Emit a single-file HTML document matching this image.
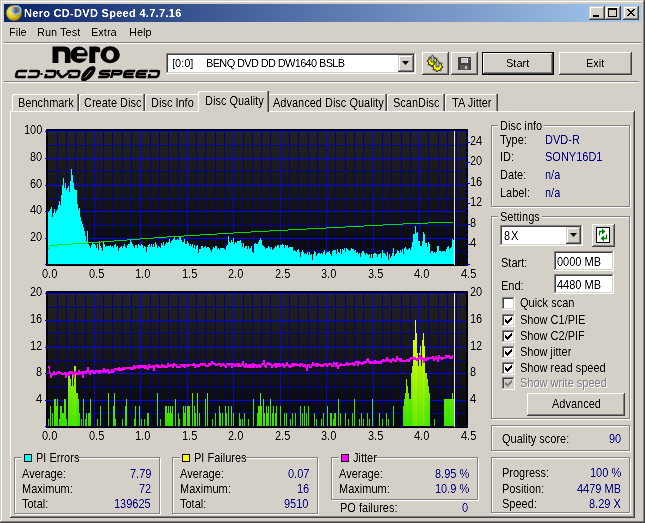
<!DOCTYPE html>
<html><head><meta charset="utf-8"><style>
html,body{margin:0;padding:0;width:645px;height:523px;overflow:hidden;background:#D4D0C8}
body{position:relative;font-family:"Liberation Sans", sans-serif;font-size:11px}
body div, body svg{position:absolute;box-sizing:border-box}
.t{filter:url(#crisp);white-space:nowrap;line-height:13px;font-size:11px;font-family:"Liberation Sans", sans-serif}
</style></head><body>
<svg width="0" height="0" style="left:0;top:0"><filter id="crisp"><feComponentTransfer><feFuncA type="linear" slope="1.6" intercept="-0.3"/></feComponentTransfer></filter></svg>
<div style="left:0px;top:0px;width:645px;height:523px;background:#D4D0C8;"></div>
<div style="left:1px;top:1px;width:642px;height:1px;background:#fff;"></div>
<div style="left:1px;top:1px;width:1px;height:520px;background:#fff;"></div>
<div style="left:644px;top:0px;width:1px;height:523px;background:#404040;"></div>
<div style="left:0px;top:522px;width:645px;height:1px;background:#404040;"></div>
<div style="left:643px;top:1px;width:1px;height:521px;background:#808080;"></div>
<div style="left:1px;top:521px;width:643px;height:1px;background:#808080;"></div>
<div style="left:4px;top:4px;width:637px;height:18px;background:linear-gradient(to right,#0A246A,#A6CAF0);"></div>
<svg style="left:6px;top:5px" width="16" height="16" viewBox="0 0 16 16">
<defs><radialGradient id="cdg" cx="0.4" cy="0.4" r="0.6"><stop offset="0" stop-color="#fff8b0"/><stop offset="0.6" stop-color="#e0c820"/><stop offset="1" stop-color="#a08800"/></radialGradient></defs>
<circle cx="8" cy="8" r="7.8" fill="url(#cdg)"/>
<circle cx="10.5" cy="5.2" r="4.8" fill="#d0d8e0" stroke="#808890" stroke-width="0.8"/>
<circle cx="10.5" cy="5.2" r="3.4" fill="#2090e0"/>
<path d="M8.5 2.5 L11.5 5.5 L9 8" stroke="#e03010" stroke-width="1.4" fill="none"/>
<circle cx="12" cy="3.5" r="1.1" fill="#30a030"/>
</svg>
<div class="t" style="left:24px;top:7px;color:#fff;font-weight:bold;letter-spacing:0.3px">Nero CD-DVD Speed 4.7.7.16</div>
<div style="left:589px;top:6px;width:16px;height:14px;background:#D4D0C8;box-shadow: inset -1px -1px #404040, inset 1px 1px #D4D0C8, inset -2px -2px #808080, inset 2px 2px #fff;"></div>
<div style="left:605px;top:6px;width:16px;height:14px;background:#D4D0C8;box-shadow: inset -1px -1px #404040, inset 1px 1px #D4D0C8, inset -2px -2px #808080, inset 2px 2px #fff;"></div>
<div style="left:623px;top:6px;width:16px;height:14px;background:#D4D0C8;box-shadow: inset -1px -1px #404040, inset 1px 1px #D4D0C8, inset -2px -2px #808080, inset 2px 2px #fff;"></div>
<div style="left:593px;top:15px;width:6px;height:2px;background:#000"></div>
<div style="left:608px;top:8px;width:9px;height:9px;border:1px solid #000;border-top-width:2px"></div>
<svg style="left:627px;top:9px" width="8" height="7" shape-rendering="crispEdges"><path d="M0 0h1v1h-1zM1 0h1v1h-1zM6 0h1v1h-1zM7 0h1v1h-1zM1 1h1v1h-1zM2 1h1v1h-1zM5 1h1v1h-1zM6 1h1v1h-1zM2 2h1v1h-1zM3 2h1v1h-1zM4 2h1v1h-1zM5 2h1v1h-1zM3 3h1v1h-1zM4 3h1v1h-1zM2 4h1v1h-1zM3 4h1v1h-1zM4 4h1v1h-1zM5 4h1v1h-1zM1 5h1v1h-1zM2 5h1v1h-1zM5 5h1v1h-1zM6 5h1v1h-1zM0 6h1v1h-1zM1 6h1v1h-1zM6 6h1v1h-1zM7 6h1v1h-1z" fill="#000"/></svg>
<div class="t" style="left:9px;top:26px;color:#000;">File</div>
<div class="t" style="left:37px;top:26px;color:#000;">Run Test</div>
<div class="t" style="left:91px;top:26px;color:#000;">Extra</div>
<div class="t" style="left:129px;top:26px;color:#000;">Help</div>
<div style="left:4px;top:42px;width:637px;height:1px;background:#808080;"></div>
<div style="left:4px;top:43px;width:637px;height:1px;background:#fff;"></div>
<svg style="left:0;top:0" width="170" height="90" viewBox="0 0 170 90"><path d="M52.5 46.5 H64.5 Q70.5 46.5 70.5 52.5 V63 H64.9 V53.5 Q64.9 51.4 62.8 51.4 H58.4 V63 H52.5 Z" fill="#000"/><ellipse cx="79" cy="54.75" rx="8.7" ry="8.25" fill="#000"/><rect x="77" y="50.1" width="7.5" height="3.1" rx="1.5" fill="#D4D0C8"/><rect x="77" y="56.3" width="12" height="2.2" fill="#D4D0C8"/><path d="M89.3 63 V46.5 H96 Q100.2 46.5 100.2 49 V52.3 H95.2 V63 Z" fill="#000"/><ellipse cx="110.15" cy="54.75" rx="9.7" ry="8.5" fill="#000"/><ellipse cx="110" cy="55" rx="3.9" ry="4.8" fill="#D4D0C8"/><g transform="translate(0,78) skewX(-14) translate(0,-78)" fill="none" stroke="#000" stroke-width="2.6"><path transform="translate(14.5,70)" d="M11 1 H3 Q1 1 1 3 V5 Q1 7 3 7 H11"/><path transform="translate(27.5,70)" d="M0 1 H8 Q10 1 10 3 V5 Q10 7 8 7 H0"/><path transform="translate(44,70)" d="M0 1 H8 Q10 1 10 3 V5 Q10 7 8 7 H0 M1.2 4 V7"/><path transform="translate(56.5,70)" d="M0 0 V3 L4.5 7 H6 L10.5 3 V0"/><path transform="translate(68,70)" d="M0 1 H8 Q10 1 10 3 V5 Q10 7 8 7 H0 M1.2 4 V7"/><path transform="translate(98,70)" d="M11 1 H3 Q1 1 1 2.5 Q1 4 3 4 H8 Q10 4 10 5.5 Q10 7 8 7 H0"/><path transform="translate(110,70)" d="M1.2 8 V1 H8 Q10 1 10 2.6 Q10 4.2 8 4.2 H2"/><path transform="translate(122.5,70)" d="M11 1 H3 Q1 1 1 3 V5 Q1 7 3 7 H11 M1.5 4 H10"/><path transform="translate(135,70)" d="M11 1 H3 Q1 1 1 3 V5 Q1 7 3 7 H11 M1.5 4 H10"/><path transform="translate(147.5,70)" d="M0 1 H8 Q10 1 10 3 V5 Q10 7 8 7 H0 M1.2 4 V7"/></g><rect x="40.5" y="73" width="2" height="2" fill="#000"/><ellipse cx="88.3" cy="73.7" rx="9.6" ry="4.4" transform="rotate(-47 88.3 73.7)" fill="#000"/><path d="M85 77.5 L91.5 70" stroke="#D4D0C8" stroke-width="0.9"/></svg>
<div style="left:166px;top:53px;width:250px;height:21px;background:#fff;box-shadow: inset -1px -1px #fff, inset 1px 1px #808080, inset -2px -2px #D4D0C8, inset 2px 2px #404040;"></div>
<div class="t" style="left:172px;top:57px;color:#000;">[0:0]</div>
<div class="t" style="left:206px;top:57px;color:#000;letter-spacing:-0.65px">BENQ DVD DD DW1640 BSLB</div>
<div style="left:398px;top:55px;width:16px;height:17px;background:#D4D0C8;box-shadow: inset -1px -1px #404040, inset 1px 1px #D4D0C8, inset -2px -2px #808080, inset 2px 2px #fff;"></div>
<svg style="left:402px;top:61px" width="8" height="5"><path d="M0 0 H7 L3.5 4 Z" fill="#000"/></svg>
<div style="left:422px;top:52px;width:27px;height:23px;background:#D4D0C8;box-shadow: inset -1px -1px #404040, inset 1px 1px #fff, inset -2px -2px #808080;"></div>
<div style="left:451px;top:52px;width:27px;height:23px;background:#D4D0C8;box-shadow: inset -1px -1px #404040, inset 1px 1px #fff, inset -2px -2px #808080;"></div>
<svg style="left:426px;top:54px" width="19" height="19" viewBox="0 0 19 19">
<path d="M11.70 7.50 L11.60 8.51 L10.10 8.99 L9.74 9.67 L10.18 11.18 L9.39 11.82 L7.99 11.10 L7.26 11.33 L6.50 12.70 L5.49 12.60 L5.01 11.10 L4.33 10.74 L2.82 11.18 L2.18 10.39 L2.90 8.99 L2.67 8.26 L1.30 7.50 L1.40 6.49 L2.90 6.01 L3.26 5.33 L2.82 3.82 L3.61 3.18 L5.01 3.90 L5.74 3.67 L6.50 2.30 L7.51 2.40 L7.99 3.90 L8.67 4.26 L10.18 3.82 L10.82 4.61 L10.10 6.01 L10.33 6.74Z" fill="#FFFF00" stroke="#000" stroke-width="1"/>
<path d="M5 8 V3 L6.5 0.8 L8 3 V8 Z" fill="#B0B8C8" stroke="#303040" stroke-width="0.8"/>
<path d="M16.70 12.50 L16.60 13.51 L15.10 13.99 L14.74 14.67 L15.18 16.18 L14.39 16.82 L12.99 16.10 L12.26 16.33 L11.50 17.70 L10.49 17.60 L10.01 16.10 L9.33 15.74 L7.82 16.18 L7.18 15.39 L7.90 13.99 L7.67 13.26 L6.30 12.50 L6.40 11.49 L7.90 11.01 L8.26 10.33 L7.82 8.82 L8.61 8.18 L10.01 8.90 L10.74 8.67 L11.50 7.30 L12.51 7.40 L12.99 8.90 L13.67 9.26 L15.18 8.82 L15.82 9.61 L15.10 11.01 L15.33 11.74Z" fill="#FFFF00" stroke="#000" stroke-width="1"/>
<path d="M10 13 V8 L11.5 5.8 L13 8 V13 Z" fill="#B0B8C8" stroke="#303040" stroke-width="0.8"/>
</svg>
<svg style="left:458px;top:57px" width="14" height="14" viewBox="0 0 14 14" shape-rendering="crispEdges">
<path d="M0 0 H12 L13 1 V13 H0 Z" fill="#404040"/>
<rect x="3" y="1" width="7" height="5" fill="#C8C8C8"/>
<rect x="9" y="1" width="1" height="5" fill="#FFFFFF"/>
<rect x="11" y="2" width="1" height="1" fill="#C0C0C0"/>
<rect x="2" y="8" width="9" height="5" fill="#5A5A5A"/>
<rect x="7" y="9" width="2" height="3" fill="#C0C0C0"/>
</svg>
<div style="left:482px;top:52px;width:72px;height:23px;background:#000;"></div>
<div style="left:483px;top:53px;width:70px;height:21px;background:#D4D0C8;box-shadow: inset -1px -1px #404040, inset 1px 1px #fff, inset -2px -2px #808080;"></div>
<div class="t" style="left:506px;top:57px;color:#000;">Start</div>
<div style="left:559px;top:52px;width:73px;height:23px;background:#D4D0C8;box-shadow: inset -1px -1px #404040, inset 1px 1px #fff, inset -2px -2px #808080;"></div>
<div class="t" style="left:586px;top:57px;color:#000;">Exit</div>
<div style="left:4px;top:81px;width:635px;height:1px;background:#808080;"></div>
<div style="left:4px;top:82px;width:635px;height:1px;background:#fff;"></div>
<div style="left:10px;top:111px;width:625px;height:407px;background:#D4D0C8;box-shadow: inset -1px -1px #404040, inset 1px 1px #fff, inset -2px -2px #808080;"></div>
<div style="left:12px;top:94px;width:67px;height:17px;background:#D4D0C8;box-shadow: inset -1px 0 #404040, inset -2px 0 #808080, inset 1px 1px #fff;border-top-left-radius:2px;"></div>
<div class="t" style="left:18px;top:97px;color:#000;transform:scaleY(1.12);transform-origin:0 10px;">Benchmark</div>
<div style="left:79px;top:94px;width:66px;height:17px;background:#D4D0C8;box-shadow: inset -1px 0 #404040, inset -2px 0 #808080, inset 1px 1px #fff;border-top-left-radius:2px;"></div>
<div class="t" style="left:84px;top:97px;color:#000;transform:scaleY(1.12);transform-origin:0 10px;">Create Disc</div>
<div style="left:145px;top:94px;width:55px;height:17px;background:#D4D0C8;box-shadow: inset -1px 0 #404040, inset -2px 0 #808080, inset 1px 1px #fff;border-top-left-radius:2px;"></div>
<div class="t" style="left:151px;top:97px;color:#000;transform:scaleY(1.12);transform-origin:0 10px;">Disc Info</div>
<div style="left:267px;top:94px;width:120px;height:17px;background:#D4D0C8;box-shadow: inset -1px 0 #404040, inset -2px 0 #808080, inset 1px 1px #fff;border-top-left-radius:2px;"></div>
<div class="t" style="left:273px;top:97px;color:#000;transform:scaleY(1.12);transform-origin:0 10px;">Advanced Disc Quality</div>
<div style="left:387px;top:94px;width:58px;height:17px;background:#D4D0C8;box-shadow: inset -1px 0 #404040, inset -2px 0 #808080, inset 1px 1px #fff;border-top-left-radius:2px;"></div>
<div class="t" style="left:393px;top:97px;color:#000;transform:scaleY(1.12);transform-origin:0 10px;">ScanDisc</div>
<div style="left:445px;top:94px;width:53px;height:17px;background:#D4D0C8;box-shadow: inset -1px 0 #404040, inset -2px 0 #808080, inset 1px 1px #fff;border-top-left-radius:2px;"></div>
<div class="t" style="left:452px;top:97px;color:#000;transform:scaleY(1.12);transform-origin:0 10px;">TA Jitter</div>
<div style="left:198px;top:91px;width:71px;height:21px;background:#D4D0C8;box-shadow: inset -1px 0 #404040, inset -2px 0 #808080, inset 1px 1px #fff;border-top-left-radius:2px;"></div>
<div class="t" style="left:205px;top:95px;color:#000;transform:scaleY(1.12);transform-origin:0 10px;">Disc Quality</div>
<svg style="left:0;top:0" width="645" height="523" shape-rendering="crispEdges"><defs><linearGradient id="bg" x1="0" y1="0" x2="0" y2="1"><stop offset="0" stop-color="#222222"/><stop offset="1" stop-color="#080808"/></linearGradient><linearGradient id="bar" gradientUnits="userSpaceOnUse" x1="0" y1="427" x2="0" y2="307"><stop offset="0" stop-color="#10E000"/><stop offset="0.35" stop-color="#70F000"/><stop offset="1" stop-color="#FFFF00"/></linearGradient><linearGradient id="bg1" x1="0" y1="0" x2="0" y2="1"><stop offset="0" stop-color="#2FE200"/><stop offset="1" stop-color="#25E100"/></linearGradient><linearGradient id="bg2" x1="0" y1="0" x2="0" y2="1"><stop offset="0" stop-color="#3EE400"/><stop offset="1" stop-color="#2AE100"/></linearGradient><linearGradient id="bg3" x1="0" y1="0" x2="0" y2="1"><stop offset="0" stop-color="#4DE600"/><stop offset="1" stop-color="#30E200"/></linearGradient><linearGradient id="bg4" x1="0" y1="0" x2="0" y2="1"><stop offset="0" stop-color="#5BE800"/><stop offset="1" stop-color="#35E300"/></linearGradient><linearGradient id="bg5" x1="0" y1="0" x2="0" y2="1"><stop offset="0" stop-color="#6AEA00"/><stop offset="1" stop-color="#3AE400"/></linearGradient><linearGradient id="bg6" x1="0" y1="0" x2="0" y2="1"><stop offset="0" stop-color="#79EC00"/><stop offset="1" stop-color="#3FE400"/></linearGradient><linearGradient id="bg7" x1="0" y1="0" x2="0" y2="1"><stop offset="0" stop-color="#88EE00"/><stop offset="1" stop-color="#44E500"/></linearGradient><linearGradient id="bg8" x1="0" y1="0" x2="0" y2="1"><stop offset="0" stop-color="#97F100"/><stop offset="1" stop-color="#4AE600"/></linearGradient><linearGradient id="bg9" x1="0" y1="0" x2="0" y2="1"><stop offset="0" stop-color="#A6F300"/><stop offset="1" stop-color="#4FE700"/></linearGradient><linearGradient id="bg11" x1="0" y1="0" x2="0" y2="1"><stop offset="0" stop-color="#C4F700"/><stop offset="1" stop-color="#59E800"/></linearGradient><linearGradient id="bg12" x1="0" y1="0" x2="0" y2="1"><stop offset="0" stop-color="#D2F900"/><stop offset="1" stop-color="#5EE900"/></linearGradient><linearGradient id="bg13" x1="0" y1="0" x2="0" y2="1"><stop offset="0" stop-color="#E1FB00"/><stop offset="1" stop-color="#64E900"/></linearGradient><linearGradient id="bg14" x1="0" y1="0" x2="0" y2="1"><stop offset="0" stop-color="#F0FD00"/><stop offset="1" stop-color="#69EA00"/></linearGradient><linearGradient id="bg16" x1="0" y1="0" x2="0" y2="1"><stop offset="0" stop-color="#FFFF00"/><stop offset="1" stop-color="#6EEB00"/></linearGradient></defs><rect x="46" y="129" width="422" height="137" fill="#000"/><rect x="48" y="131" width="418" height="134" fill="url(#bg)"/><rect x="45" y="128" width="1" height="1" fill="#fff"/><rect x="46" y="291" width="422" height="137" fill="#000"/><rect x="48" y="293" width="418" height="134" fill="url(#bg)"/><rect x="45" y="290" width="1" height="1" fill="#fff"/><rect x="57" y="131" width="1" height="134" fill="#000090"/><rect x="66" y="131" width="1" height="134" fill="#000090"/><rect x="75" y="131" width="1" height="134" fill="#000090"/><rect x="85" y="131" width="1" height="134" fill="#000090"/><rect x="103" y="131" width="1" height="134" fill="#000090"/><rect x="112" y="131" width="1" height="134" fill="#000090"/><rect x="122" y="131" width="1" height="134" fill="#000090"/><rect x="131" y="131" width="1" height="134" fill="#000090"/><rect x="150" y="131" width="1" height="134" fill="#000090"/><rect x="159" y="131" width="1" height="134" fill="#000090"/><rect x="168" y="131" width="1" height="134" fill="#000090"/><rect x="178" y="131" width="1" height="134" fill="#000090"/><rect x="196" y="131" width="1" height="134" fill="#000090"/><rect x="205" y="131" width="1" height="134" fill="#000090"/><rect x="215" y="131" width="1" height="134" fill="#000090"/><rect x="224" y="131" width="1" height="134" fill="#000090"/><rect x="243" y="131" width="1" height="134" fill="#000090"/><rect x="252" y="131" width="1" height="134" fill="#000090"/><rect x="261" y="131" width="1" height="134" fill="#000090"/><rect x="270" y="131" width="1" height="134" fill="#000090"/><rect x="289" y="131" width="1" height="134" fill="#000090"/><rect x="298" y="131" width="1" height="134" fill="#000090"/><rect x="308" y="131" width="1" height="134" fill="#000090"/><rect x="317" y="131" width="1" height="134" fill="#000090"/><rect x="335" y="131" width="1" height="134" fill="#000090"/><rect x="345" y="131" width="1" height="134" fill="#000090"/><rect x="354" y="131" width="1" height="134" fill="#000090"/><rect x="363" y="131" width="1" height="134" fill="#000090"/><rect x="382" y="131" width="1" height="134" fill="#000090"/><rect x="391" y="131" width="1" height="134" fill="#000090"/><rect x="401" y="131" width="1" height="134" fill="#000090"/><rect x="410" y="131" width="1" height="134" fill="#000090"/><rect x="428" y="131" width="1" height="134" fill="#000090"/><rect x="438" y="131" width="1" height="134" fill="#000090"/><rect x="447" y="131" width="1" height="134" fill="#000090"/><rect x="456" y="131" width="1" height="134" fill="#000090"/><rect x="46" y="145" width="420" height="1" fill="#000090"/><rect x="46" y="171" width="420" height="1" fill="#000090"/><rect x="46" y="198" width="420" height="1" fill="#000090"/><rect x="46" y="225" width="420" height="1" fill="#000090"/><rect x="46" y="251" width="420" height="1" fill="#000090"/><rect x="94" y="131" width="1" height="134" fill="#0000FF"/><rect x="140" y="131" width="1" height="134" fill="#0000FF"/><rect x="187" y="131" width="1" height="134" fill="#0000FF"/><rect x="233" y="131" width="1" height="134" fill="#0000FF"/><rect x="280" y="131" width="1" height="134" fill="#0000FF"/><rect x="326" y="131" width="1" height="134" fill="#0000FF"/><rect x="373" y="131" width="1" height="134" fill="#0000FF"/><rect x="419" y="131" width="1" height="134" fill="#0000FF"/><rect x="45" y="131" width="421" height="1" fill="#0000FF"/><rect x="45" y="158" width="421" height="1" fill="#0000FF"/><rect x="45" y="185" width="421" height="1" fill="#0000FF"/><rect x="45" y="211" width="421" height="1" fill="#0000FF"/><rect x="45" y="238" width="421" height="1" fill="#0000FF"/><rect x="45" y="264" width="3" height="1" fill="#0000FF"/><rect x="57" y="293" width="1" height="134" fill="#000090"/><rect x="66" y="293" width="1" height="134" fill="#000090"/><rect x="75" y="293" width="1" height="134" fill="#000090"/><rect x="85" y="293" width="1" height="134" fill="#000090"/><rect x="103" y="293" width="1" height="134" fill="#000090"/><rect x="112" y="293" width="1" height="134" fill="#000090"/><rect x="122" y="293" width="1" height="134" fill="#000090"/><rect x="131" y="293" width="1" height="134" fill="#000090"/><rect x="150" y="293" width="1" height="134" fill="#000090"/><rect x="159" y="293" width="1" height="134" fill="#000090"/><rect x="168" y="293" width="1" height="134" fill="#000090"/><rect x="178" y="293" width="1" height="134" fill="#000090"/><rect x="196" y="293" width="1" height="134" fill="#000090"/><rect x="205" y="293" width="1" height="134" fill="#000090"/><rect x="215" y="293" width="1" height="134" fill="#000090"/><rect x="224" y="293" width="1" height="134" fill="#000090"/><rect x="243" y="293" width="1" height="134" fill="#000090"/><rect x="252" y="293" width="1" height="134" fill="#000090"/><rect x="261" y="293" width="1" height="134" fill="#000090"/><rect x="270" y="293" width="1" height="134" fill="#000090"/><rect x="289" y="293" width="1" height="134" fill="#000090"/><rect x="298" y="293" width="1" height="134" fill="#000090"/><rect x="308" y="293" width="1" height="134" fill="#000090"/><rect x="317" y="293" width="1" height="134" fill="#000090"/><rect x="335" y="293" width="1" height="134" fill="#000090"/><rect x="345" y="293" width="1" height="134" fill="#000090"/><rect x="354" y="293" width="1" height="134" fill="#000090"/><rect x="363" y="293" width="1" height="134" fill="#000090"/><rect x="382" y="293" width="1" height="134" fill="#000090"/><rect x="391" y="293" width="1" height="134" fill="#000090"/><rect x="401" y="293" width="1" height="134" fill="#000090"/><rect x="410" y="293" width="1" height="134" fill="#000090"/><rect x="428" y="293" width="1" height="134" fill="#000090"/><rect x="438" y="293" width="1" height="134" fill="#000090"/><rect x="447" y="293" width="1" height="134" fill="#000090"/><rect x="456" y="293" width="1" height="134" fill="#000090"/><rect x="46" y="307" width="420" height="1" fill="#000090"/><rect x="46" y="333" width="420" height="1" fill="#000090"/><rect x="46" y="360" width="420" height="1" fill="#000090"/><rect x="46" y="387" width="420" height="1" fill="#000090"/><rect x="46" y="413" width="420" height="1" fill="#000090"/><rect x="94" y="293" width="1" height="134" fill="#0000FF"/><rect x="140" y="293" width="1" height="134" fill="#0000FF"/><rect x="187" y="293" width="1" height="134" fill="#0000FF"/><rect x="233" y="293" width="1" height="134" fill="#0000FF"/><rect x="280" y="293" width="1" height="134" fill="#0000FF"/><rect x="326" y="293" width="1" height="134" fill="#0000FF"/><rect x="373" y="293" width="1" height="134" fill="#0000FF"/><rect x="419" y="293" width="1" height="134" fill="#0000FF"/><rect x="45" y="293" width="421" height="1" fill="#0000FF"/><rect x="45" y="320" width="421" height="1" fill="#0000FF"/><rect x="45" y="347" width="421" height="1" fill="#0000FF"/><rect x="45" y="373" width="421" height="1" fill="#0000FF"/><rect x="45" y="400" width="421" height="1" fill="#0000FF"/><rect x="45" y="426" width="3" height="1" fill="#0000FF"/><path d="M48 212h1V264h-1ZM49 211h1V264h-1ZM50 209h1V264h-1ZM51 207h1V264h-1ZM52 217h1V264h-1ZM53 213h1V264h-1ZM54 209h1V264h-1ZM55 213h1V264h-1ZM56 211h1V264h-1ZM57 209h1V264h-1ZM58 205h1V264h-1ZM59 201h1V264h-1ZM60 205h1V264h-1ZM61 195h1V264h-1ZM62 185h1V264h-1ZM63 178h1V264h-1ZM64 188h1V264h-1ZM65 183h1V264h-1ZM66 190h1V264h-1ZM67 188h1V264h-1ZM68 186h1V264h-1ZM69 192h1V264h-1ZM70 181h1V264h-1ZM71 169h1V264h-1ZM72 175h1V264h-1ZM73 183h1V264h-1ZM74 189h1V264h-1ZM75 190h1V264h-1ZM76 190h1V264h-1ZM77 204h1V264h-1ZM78 210h1V264h-1ZM79 208h1V264h-1ZM80 217h1V264h-1ZM81 221h1V264h-1ZM82 224h1V264h-1ZM83 227h1V264h-1ZM84 231h1V264h-1ZM85 236h1V264h-1ZM86 241h1V264h-1ZM87 231h1V264h-1ZM88 244h1V264h-1ZM89 246h1V264h-1ZM90 248h1V264h-1ZM91 245h1V264h-1ZM92 243h1V264h-1ZM93 244h1V264h-1ZM94 244h1V264h-1ZM95 245h1V264h-1ZM96 248h1V264h-1ZM97 244h1V264h-1ZM98 250h1V264h-1ZM99 241h1V264h-1ZM100 246h1V264h-1ZM101 248h1V264h-1ZM102 251h1V264h-1ZM103 241h1V264h-1ZM104 244h1V264h-1ZM105 247h1V264h-1ZM106 246h1V264h-1ZM107 246h1V264h-1ZM108 246h1V264h-1ZM109 246h1V264h-1ZM110 245h1V264h-1ZM111 247h1V264h-1ZM112 246h1V264h-1ZM113 248h1V264h-1ZM114 245h1V264h-1ZM115 244h1V264h-1ZM116 247h1V264h-1ZM117 246h1V264h-1ZM118 251h1V264h-1ZM119 248h1V264h-1ZM120 247h1V264h-1ZM121 246h1V264h-1ZM122 248h1V264h-1ZM123 246h1V264h-1ZM124 244h1V264h-1ZM125 247h1V264h-1ZM126 248h1V264h-1ZM127 245h1V264h-1ZM128 244h1V264h-1ZM129 244h1V264h-1ZM130 239h1V264h-1ZM131 242h1V264h-1ZM132 244h1V264h-1ZM133 246h1V264h-1ZM134 248h1V264h-1ZM135 245h1V264h-1ZM136 245h1V264h-1ZM137 248h1V264h-1ZM138 244h1V264h-1ZM139 245h1V264h-1ZM140 246h1V264h-1ZM141 244h1V264h-1ZM142 245h1V264h-1ZM143 248h1V264h-1ZM144 246h1V264h-1ZM145 247h1V264h-1ZM146 252h1V264h-1ZM147 247h1V264h-1ZM148 245h1V264h-1ZM149 244h1V264h-1ZM150 247h1V264h-1ZM151 244h1V264h-1ZM152 247h1V264h-1ZM153 244h1V264h-1ZM154 247h1V264h-1ZM155 242h1V264h-1ZM156 244h1V264h-1ZM157 248h1V264h-1ZM158 246h1V264h-1ZM159 247h1V264h-1ZM160 248h1V264h-1ZM161 243h1V264h-1ZM162 245h1V264h-1ZM163 242h1V264h-1ZM164 246h1V264h-1ZM165 244h1V264h-1ZM166 242h1V264h-1ZM167 243h1V264h-1ZM168 242h1V264h-1ZM169 239h1V264h-1ZM170 243h1V264h-1ZM171 241h1V264h-1ZM172 240h1V264h-1ZM173 239h1V264h-1ZM174 236h1V264h-1ZM175 240h1V264h-1ZM176 240h1V264h-1ZM177 239h1V264h-1ZM178 240h1V264h-1ZM179 237h1V264h-1ZM180 237h1V264h-1ZM181 240h1V264h-1ZM182 242h1V264h-1ZM183 242h1V264h-1ZM184 239h1V264h-1ZM185 244h1V264h-1ZM186 244h1V264h-1ZM187 241h1V264h-1ZM188 243h1V264h-1ZM189 246h1V264h-1ZM190 244h1V264h-1ZM191 246h1V264h-1ZM192 244h1V264h-1ZM193 248h1V264h-1ZM194 245h1V264h-1ZM195 249h1V264h-1ZM196 246h1V264h-1ZM197 245h1V264h-1ZM198 253h1V264h-1ZM199 249h1V264h-1ZM200 249h1V264h-1ZM201 246h1V264h-1ZM202 246h1V264h-1ZM203 248h1V264h-1ZM204 247h1V264h-1ZM205 246h1V264h-1ZM206 248h1V264h-1ZM207 247h1V264h-1ZM208 247h1V264h-1ZM209 248h1V264h-1ZM210 250h1V264h-1ZM211 252h1V264h-1ZM212 249h1V264h-1ZM213 247h1V264h-1ZM214 248h1V264h-1ZM215 246h1V264h-1ZM216 246h1V264h-1ZM217 249h1V264h-1ZM218 248h1V264h-1ZM219 250h1V264h-1ZM220 248h1V264h-1ZM221 248h1V264h-1ZM222 248h1V264h-1ZM223 248h1V264h-1ZM224 249h1V264h-1ZM225 250h1V264h-1ZM226 246h1V264h-1ZM227 245h1V264h-1ZM228 236h1V264h-1ZM229 242h1V264h-1ZM230 243h1V264h-1ZM231 240h1V264h-1ZM232 242h1V264h-1ZM233 238h1V264h-1ZM234 244h1V264h-1ZM235 242h1V264h-1ZM236 243h1V264h-1ZM237 241h1V264h-1ZM238 241h1V264h-1ZM239 241h1V264h-1ZM240 240h1V264h-1ZM241 243h1V264h-1ZM242 247h1V264h-1ZM243 243h1V264h-1ZM244 248h1V264h-1ZM245 246h1V264h-1ZM246 246h1V264h-1ZM247 249h1V264h-1ZM248 246h1V264h-1ZM249 249h1V264h-1ZM250 248h1V264h-1ZM251 246h1V264h-1ZM252 252h1V264h-1ZM253 253h1V264h-1ZM254 244h1V264h-1ZM255 243h1V264h-1ZM256 244h1V264h-1ZM257 244h1V264h-1ZM258 242h1V264h-1ZM259 240h1V264h-1ZM260 238h1V264h-1ZM261 240h1V264h-1ZM262 245h1V264h-1ZM263 246h1V264h-1ZM264 247h1V264h-1ZM265 249h1V264h-1ZM266 248h1V264h-1ZM267 248h1V264h-1ZM268 246h1V264h-1ZM269 247h1V264h-1ZM270 249h1V264h-1ZM271 247h1V264h-1ZM272 250h1V264h-1ZM273 249h1V264h-1ZM274 248h1V264h-1ZM275 246h1V264h-1ZM276 247h1V264h-1ZM277 245h1V264h-1ZM278 245h1V264h-1ZM279 248h1V264h-1ZM280 245h1V264h-1ZM281 245h1V264h-1ZM282 244h1V264h-1ZM283 245h1V264h-1ZM284 248h1V264h-1ZM285 245h1V264h-1ZM286 246h1V264h-1ZM287 245h1V264h-1ZM288 248h1V264h-1ZM289 247h1V264h-1ZM290 247h1V264h-1ZM291 247h1V264h-1ZM292 247h1V264h-1ZM293 251h1V264h-1ZM294 250h1V264h-1ZM295 251h1V264h-1ZM296 252h1V264h-1ZM297 250h1V264h-1ZM298 249h1V264h-1ZM299 252h1V264h-1ZM300 257h1V264h-1ZM301 252h1V264h-1ZM302 250h1V264h-1ZM303 252h1V264h-1ZM304 254h1V264h-1ZM305 253h1V264h-1ZM306 254h1V264h-1ZM307 252h1V264h-1ZM308 255h1V264h-1ZM309 252h1V264h-1ZM310 255h1V264h-1ZM311 254h1V264h-1ZM312 260h1V264h-1ZM313 254h1V264h-1ZM314 251h1V264h-1ZM315 252h1V264h-1ZM316 256h1V264h-1ZM317 254h1V264h-1ZM318 253h1V264h-1ZM319 253h1V264h-1ZM320 254h1V264h-1ZM321 253h1V264h-1ZM322 254h1V264h-1ZM323 252h1V264h-1ZM324 250h1V264h-1ZM325 255h1V264h-1ZM326 253h1V264h-1ZM327 252h1V264h-1ZM328 252h1V264h-1ZM329 251h1V264h-1ZM330 254h1V264h-1ZM331 256h1V264h-1ZM332 251h1V264h-1ZM333 250h1V264h-1ZM334 250h1V264h-1ZM335 250h1V264h-1ZM336 254h1V264h-1ZM337 249h1V264h-1ZM338 252h1V264h-1ZM339 253h1V264h-1ZM340 249h1V264h-1ZM341 254h1V264h-1ZM342 249h1V264h-1ZM343 250h1V264h-1ZM344 248h1V264h-1ZM345 252h1V264h-1ZM346 248h1V264h-1ZM347 249h1V264h-1ZM348 250h1V264h-1ZM349 251h1V264h-1ZM350 250h1V264h-1ZM351 248h1V264h-1ZM352 249h1V264h-1ZM353 249h1V264h-1ZM354 251h1V264h-1ZM355 250h1V264h-1ZM356 253h1V264h-1ZM357 252h1V264h-1ZM358 254h1V264h-1ZM359 253h1V264h-1ZM360 257h1V264h-1ZM361 253h1V264h-1ZM362 251h1V264h-1ZM363 251h1V264h-1ZM364 253h1V264h-1ZM365 255h1V264h-1ZM366 253h1V264h-1ZM367 254h1V264h-1ZM368 255h1V264h-1ZM369 254h1V264h-1ZM370 258h1V264h-1ZM371 254h1V264h-1ZM372 258h1V264h-1ZM373 254h1V264h-1ZM374 253h1V264h-1ZM375 253h1V264h-1ZM376 254h1V264h-1ZM377 257h1V264h-1ZM378 254h1V264h-1ZM379 254h1V264h-1ZM380 253h1V264h-1ZM381 258h1V264h-1ZM382 250h1V264h-1ZM383 253h1V264h-1ZM384 253h1V264h-1ZM385 254h1V264h-1ZM386 256h1V264h-1ZM387 252h1V264h-1ZM388 260h1V264h-1ZM389 254h1V264h-1ZM390 258h1V264h-1ZM391 256h1V264h-1ZM392 253h1V264h-1ZM393 248h1V264h-1ZM394 256h1V264h-1ZM395 254h1V264h-1ZM396 253h1V264h-1ZM397 250h1V264h-1ZM398 251h1V264h-1ZM399 253h1V264h-1ZM400 250h1V264h-1ZM401 252h1V264h-1ZM402 249h1V264h-1ZM403 254h1V264h-1ZM404 248h1V264h-1ZM405 247h1V264h-1ZM406 249h1V264h-1ZM407 250h1V264h-1ZM408 249h1V264h-1ZM409 248h1V264h-1ZM410 250h1V264h-1ZM411 247h1V264h-1ZM412 242h1V264h-1ZM413 234h1V264h-1ZM414 234h1V264h-1ZM415 226h1V264h-1ZM416 233h1V264h-1ZM417 232h1V264h-1ZM418 241h1V264h-1ZM419 241h1V264h-1ZM420 246h1V264h-1ZM421 246h1V264h-1ZM422 241h1V264h-1ZM423 232h1V264h-1ZM424 234h1V264h-1ZM425 243h1V264h-1ZM426 243h1V264h-1ZM427 247h1V264h-1ZM428 242h1V264h-1ZM429 244h1V264h-1ZM430 253h1V264h-1ZM431 251h1V264h-1ZM432 251h1V264h-1ZM433 253h1V264h-1ZM434 252h1V264h-1ZM435 253h1V264h-1ZM436 252h1V264h-1ZM437 246h1V264h-1ZM438 246h1V264h-1ZM439 251h1V264h-1ZM440 251h1V264h-1ZM441 252h1V264h-1ZM442 251h1V264h-1ZM443 251h1V264h-1ZM444 251h1V264h-1ZM445 252h1V264h-1ZM446 249h1V264h-1ZM447 247h1V264h-1ZM448 246h1V264h-1ZM449 249h1V264h-1ZM450 248h1V264h-1ZM451 247h1V264h-1ZM452 239h1V264h-1ZM453 240h1V264h-1Z" fill="#00FFFF"/><path d="M48 248h1v1h-1ZM49 246h1v1h-1ZM50 245h1v1h-1ZM51 245h1v1h-1ZM52 245h1v1h-1ZM53 245h1v1h-1ZM54 245h1v1h-1ZM55 245h1v1h-1ZM56 245h1v1h-1ZM57 245h1v1h-1ZM58 244h1v1h-1ZM59 244h1v1h-1ZM60 244h1v1h-1ZM61 244h1v1h-1ZM62 244h1v1h-1ZM63 244h1v1h-1ZM64 244h1v1h-1ZM65 244h1v1h-1ZM66 244h1v1h-1ZM67 244h1v1h-1ZM68 244h1v1h-1ZM69 244h1v1h-1ZM70 244h1v1h-1ZM71 244h1v1h-1ZM72 243h1v1h-1ZM73 243h1v1h-1ZM74 243h1v1h-1ZM75 243h1v1h-1ZM76 243h1v1h-1ZM77 243h1v1h-1ZM78 243h1v1h-1ZM79 243h1v1h-1ZM80 243h1v1h-1ZM81 243h1v1h-1ZM82 243h1v1h-1ZM83 243h1v1h-1ZM84 243h1v1h-1ZM85 243h1v1h-1ZM86 243h1v1h-1ZM87 242h1v1h-1ZM88 242h1v1h-1ZM89 242h1v1h-1ZM90 242h1v1h-1ZM91 242h1v1h-1ZM92 242h1v1h-1ZM93 242h1v1h-1ZM94 242h1v1h-1ZM95 242h1v1h-1ZM96 242h1v1h-1ZM97 242h1v1h-1ZM98 242h1v1h-1ZM99 242h1v1h-1ZM100 242h1v1h-1ZM101 241h1v1h-1ZM102 241h1v1h-1ZM103 241h1v1h-1ZM104 241h1v1h-1ZM105 241h1v1h-1ZM106 241h1v1h-1ZM107 241h1v1h-1ZM108 241h1v1h-1ZM109 241h1v1h-1ZM110 241h1v1h-1ZM111 241h1v1h-1ZM112 241h1v1h-1ZM113 241h1v1h-1ZM114 240h1v1h-1ZM115 240h1v1h-1ZM116 240h1v1h-1ZM117 240h1v1h-1ZM118 240h1v1h-1ZM119 240h1v1h-1ZM120 240h1v1h-1ZM121 240h1v1h-1ZM122 240h1v1h-1ZM123 240h1v1h-1ZM124 240h1v1h-1ZM125 240h1v1h-1ZM126 240h1v1h-1ZM127 239h1v1h-1ZM128 239h1v1h-1ZM129 239h1v1h-1ZM130 239h1v1h-1ZM131 239h1v1h-1ZM132 239h1v1h-1ZM133 239h1v1h-1ZM134 239h1v1h-1ZM135 239h1v1h-1ZM136 239h1v1h-1ZM137 239h1v1h-1ZM138 239h1v1h-1ZM139 239h1v1h-1ZM140 238h1v1h-1ZM141 238h1v1h-1ZM142 238h1v1h-1ZM143 238h1v1h-1ZM144 238h1v1h-1ZM145 238h1v1h-1ZM146 238h1v1h-1ZM147 238h1v1h-1ZM148 238h1v1h-1ZM149 238h1v1h-1ZM150 238h1v1h-1ZM151 238h1v1h-1ZM152 238h1v1h-1ZM153 238h1v1h-1ZM154 237h1v1h-1ZM155 237h1v1h-1ZM156 237h1v1h-1ZM157 237h1v1h-1ZM158 237h1v1h-1ZM159 237h1v1h-1ZM160 237h1v1h-1ZM161 237h1v1h-1ZM162 237h1v1h-1ZM163 237h1v1h-1ZM164 237h1v1h-1ZM165 237h1v1h-1ZM166 237h1v1h-1ZM167 236h1v1h-1ZM168 236h1v1h-1ZM169 236h1v1h-1ZM170 236h1v1h-1ZM171 236h1v1h-1ZM172 236h1v1h-1ZM173 236h1v1h-1ZM174 236h1v1h-1ZM175 236h1v1h-1ZM176 236h1v1h-1ZM177 236h1v1h-1ZM178 236h1v1h-1ZM179 236h1v1h-1ZM180 236h1v1h-1ZM181 236h1v1h-1ZM182 236h1v1h-1ZM183 236h1v1h-1ZM184 235h1v1h-1ZM185 235h1v1h-1ZM186 235h1v1h-1ZM187 235h1v1h-1ZM188 235h1v1h-1ZM189 235h1v1h-1ZM190 235h1v1h-1ZM191 235h1v1h-1ZM192 235h1v1h-1ZM193 235h1v1h-1ZM194 235h1v1h-1ZM195 235h1v1h-1ZM196 235h1v1h-1ZM197 235h1v1h-1ZM198 235h1v1h-1ZM199 235h1v1h-1ZM200 234h1v1h-1ZM201 234h1v1h-1ZM202 234h1v1h-1ZM203 234h1v1h-1ZM204 234h1v1h-1ZM205 234h1v1h-1ZM206 234h1v1h-1ZM207 234h1v1h-1ZM208 234h1v1h-1ZM209 234h1v1h-1ZM210 234h1v1h-1ZM211 234h1v1h-1ZM212 234h1v1h-1ZM213 234h1v1h-1ZM214 234h1v1h-1ZM215 234h1v1h-1ZM216 234h1v1h-1ZM217 233h1v1h-1ZM218 233h1v1h-1ZM219 233h1v1h-1ZM220 233h1v1h-1ZM221 233h1v1h-1ZM222 233h1v1h-1ZM223 233h1v1h-1ZM224 233h1v1h-1ZM225 233h1v1h-1ZM226 233h1v1h-1ZM227 233h1v1h-1ZM228 233h1v1h-1ZM229 233h1v1h-1ZM230 233h1v1h-1ZM231 233h1v1h-1ZM232 233h1v1h-1ZM233 233h1v1h-1ZM234 232h1v1h-1ZM235 232h1v1h-1ZM236 232h1v1h-1ZM237 232h1v1h-1ZM238 232h1v1h-1ZM239 232h1v1h-1ZM240 232h1v1h-1ZM241 232h1v1h-1ZM242 232h1v1h-1ZM243 232h1v1h-1ZM244 232h1v1h-1ZM245 232h1v1h-1ZM246 232h1v1h-1ZM247 232h1v1h-1ZM248 232h1v1h-1ZM249 232h1v1h-1ZM250 232h1v1h-1ZM251 231h1v1h-1ZM252 231h1v1h-1ZM253 231h1v1h-1ZM254 231h1v1h-1ZM255 231h1v1h-1ZM256 231h1v1h-1ZM257 231h1v1h-1ZM258 231h1v1h-1ZM259 231h1v1h-1ZM260 231h1v1h-1ZM261 231h1v1h-1ZM262 231h1v1h-1ZM263 231h1v1h-1ZM264 231h1v1h-1ZM265 231h1v1h-1ZM266 231h1v1h-1ZM267 231h1v1h-1ZM268 231h1v1h-1ZM269 230h1v1h-1ZM270 230h1v1h-1ZM271 230h1v1h-1ZM272 230h1v1h-1ZM273 230h1v1h-1ZM274 230h1v1h-1ZM275 230h1v1h-1ZM276 230h1v1h-1ZM277 230h1v1h-1ZM278 230h1v1h-1ZM279 230h1v1h-1ZM280 230h1v1h-1ZM281 230h1v1h-1ZM282 230h1v1h-1ZM283 230h1v1h-1ZM284 230h1v1h-1ZM285 230h1v1h-1ZM286 230h1v1h-1ZM287 230h1v1h-1ZM288 229h1v1h-1ZM289 229h1v1h-1ZM290 229h1v1h-1ZM291 229h1v1h-1ZM292 229h1v1h-1ZM293 229h1v1h-1ZM294 229h1v1h-1ZM295 229h1v1h-1ZM296 229h1v1h-1ZM297 229h1v1h-1ZM298 229h1v1h-1ZM299 229h1v1h-1ZM300 229h1v1h-1ZM301 229h1v1h-1ZM302 229h1v1h-1ZM303 229h1v1h-1ZM304 229h1v1h-1ZM305 229h1v1h-1ZM306 229h1v1h-1ZM307 228h1v1h-1ZM308 228h1v1h-1ZM309 228h1v1h-1ZM310 228h1v1h-1ZM311 228h1v1h-1ZM312 228h1v1h-1ZM313 228h1v1h-1ZM314 228h1v1h-1ZM315 228h1v1h-1ZM316 228h1v1h-1ZM317 228h1v1h-1ZM318 228h1v1h-1ZM319 228h1v1h-1ZM320 228h1v1h-1ZM321 228h1v1h-1ZM322 228h1v1h-1ZM323 228h1v1h-1ZM324 228h1v1h-1ZM325 228h1v1h-1ZM326 227h1v1h-1ZM327 227h1v1h-1ZM328 227h1v1h-1ZM329 227h1v1h-1ZM330 227h1v1h-1ZM331 227h1v1h-1ZM332 227h1v1h-1ZM333 227h1v1h-1ZM334 227h1v1h-1ZM335 227h1v1h-1ZM336 227h1v1h-1ZM337 227h1v1h-1ZM338 227h1v1h-1ZM339 227h1v1h-1ZM340 227h1v1h-1ZM341 227h1v1h-1ZM342 227h1v1h-1ZM343 227h1v1h-1ZM344 227h1v1h-1ZM345 226h1v1h-1ZM346 226h1v1h-1ZM347 226h1v1h-1ZM348 226h1v1h-1ZM349 226h1v1h-1ZM350 226h1v1h-1ZM351 226h1v1h-1ZM352 226h1v1h-1ZM353 226h1v1h-1ZM354 226h1v1h-1ZM355 226h1v1h-1ZM356 226h1v1h-1ZM357 226h1v1h-1ZM358 226h1v1h-1ZM359 226h1v1h-1ZM360 226h1v1h-1ZM361 226h1v1h-1ZM362 226h1v1h-1ZM363 226h1v1h-1ZM364 225h1v1h-1ZM365 225h1v1h-1ZM366 225h1v1h-1ZM367 225h1v1h-1ZM368 225h1v1h-1ZM369 225h1v1h-1ZM370 225h1v1h-1ZM371 225h1v1h-1ZM372 225h1v1h-1ZM373 225h1v1h-1ZM374 225h1v1h-1ZM375 225h1v1h-1ZM376 225h1v1h-1ZM377 225h1v1h-1ZM378 225h1v1h-1ZM379 225h1v1h-1ZM380 225h1v1h-1ZM381 225h1v1h-1ZM382 225h1v1h-1ZM383 224h1v1h-1ZM384 224h1v1h-1ZM385 224h1v1h-1ZM386 224h1v1h-1ZM387 224h1v1h-1ZM388 224h1v1h-1ZM389 224h1v1h-1ZM390 224h1v1h-1ZM391 224h1v1h-1ZM392 224h1v1h-1ZM393 224h1v1h-1ZM394 224h1v1h-1ZM395 224h1v1h-1ZM396 224h1v1h-1ZM397 224h1v1h-1ZM398 224h1v1h-1ZM399 224h1v1h-1ZM400 224h1v1h-1ZM401 224h1v1h-1ZM402 224h1v1h-1ZM403 223h1v1h-1ZM404 223h1v1h-1ZM405 223h1v1h-1ZM406 223h1v1h-1ZM407 223h1v1h-1ZM408 223h1v1h-1ZM409 223h1v1h-1ZM410 223h1v1h-1ZM411 223h1v1h-1ZM412 223h1v1h-1ZM413 223h1v1h-1ZM414 223h1v1h-1ZM415 223h1v1h-1ZM416 223h1v1h-1ZM417 223h1v1h-1ZM418 223h1v1h-1ZM419 223h1v1h-1ZM420 223h1v1h-1ZM421 223h1v1h-1ZM422 223h1v1h-1ZM423 223h1v1h-1ZM424 223h1v1h-1ZM425 223h1v1h-1ZM426 223h1v1h-1ZM427 223h1v1h-1ZM428 222h1v1h-1ZM429 222h1v1h-1ZM430 222h1v1h-1ZM431 222h1v1h-1ZM432 222h1v1h-1ZM433 222h1v1h-1ZM434 222h1v1h-1ZM435 222h1v1h-1ZM436 222h1v1h-1ZM437 222h1v1h-1ZM438 222h1v1h-1ZM439 222h1v1h-1ZM440 222h1v1h-1ZM441 222h1v1h-1ZM442 222h1v1h-1ZM443 222h1v1h-1ZM444 222h1v1h-1ZM445 222h1v1h-1ZM446 222h1v1h-1ZM447 222h1v1h-1ZM448 222h1v1h-1ZM449 222h1v1h-1ZM450 222h1v1h-1ZM451 222h1v1h-1ZM452 222h1v1h-1Z" fill="#00DD00"/><rect x="47" y="264" width="1" height="1" fill="#0000FF"/><rect x="47" y="426" width="1" height="1" fill="#0000FF"/><rect x="57" y="264" width="1" height="1" fill="#0000FF"/><rect x="57" y="426" width="1" height="1" fill="#0000FF"/><rect x="66" y="264" width="1" height="1" fill="#0000FF"/><rect x="66" y="426" width="1" height="1" fill="#0000FF"/><rect x="75" y="264" width="1" height="1" fill="#0000FF"/><rect x="75" y="426" width="1" height="1" fill="#0000FF"/><rect x="85" y="264" width="1" height="1" fill="#0000FF"/><rect x="85" y="426" width="1" height="1" fill="#0000FF"/><rect x="94" y="264" width="1" height="1" fill="#0000FF"/><rect x="94" y="426" width="1" height="1" fill="#0000FF"/><rect x="103" y="264" width="1" height="1" fill="#0000FF"/><rect x="103" y="426" width="1" height="1" fill="#0000FF"/><rect x="112" y="264" width="1" height="1" fill="#0000FF"/><rect x="112" y="426" width="1" height="1" fill="#0000FF"/><rect x="122" y="264" width="1" height="1" fill="#0000FF"/><rect x="122" y="426" width="1" height="1" fill="#0000FF"/><rect x="131" y="264" width="1" height="1" fill="#0000FF"/><rect x="131" y="426" width="1" height="1" fill="#0000FF"/><rect x="140" y="264" width="1" height="1" fill="#0000FF"/><rect x="140" y="426" width="1" height="1" fill="#0000FF"/><rect x="150" y="264" width="1" height="1" fill="#0000FF"/><rect x="150" y="426" width="1" height="1" fill="#0000FF"/><rect x="159" y="264" width="1" height="1" fill="#0000FF"/><rect x="159" y="426" width="1" height="1" fill="#0000FF"/><rect x="168" y="264" width="1" height="1" fill="#0000FF"/><rect x="168" y="426" width="1" height="1" fill="#0000FF"/><rect x="178" y="264" width="1" height="1" fill="#0000FF"/><rect x="178" y="426" width="1" height="1" fill="#0000FF"/><rect x="187" y="264" width="1" height="1" fill="#0000FF"/><rect x="187" y="426" width="1" height="1" fill="#0000FF"/><rect x="196" y="264" width="1" height="1" fill="#0000FF"/><rect x="196" y="426" width="1" height="1" fill="#0000FF"/><rect x="205" y="264" width="1" height="1" fill="#0000FF"/><rect x="205" y="426" width="1" height="1" fill="#0000FF"/><rect x="215" y="264" width="1" height="1" fill="#0000FF"/><rect x="215" y="426" width="1" height="1" fill="#0000FF"/><rect x="224" y="264" width="1" height="1" fill="#0000FF"/><rect x="224" y="426" width="1" height="1" fill="#0000FF"/><rect x="233" y="264" width="1" height="1" fill="#0000FF"/><rect x="233" y="426" width="1" height="1" fill="#0000FF"/><rect x="243" y="264" width="1" height="1" fill="#0000FF"/><rect x="243" y="426" width="1" height="1" fill="#0000FF"/><rect x="252" y="264" width="1" height="1" fill="#0000FF"/><rect x="252" y="426" width="1" height="1" fill="#0000FF"/><rect x="261" y="264" width="1" height="1" fill="#0000FF"/><rect x="261" y="426" width="1" height="1" fill="#0000FF"/><rect x="270" y="264" width="1" height="1" fill="#0000FF"/><rect x="270" y="426" width="1" height="1" fill="#0000FF"/><rect x="280" y="264" width="1" height="1" fill="#0000FF"/><rect x="280" y="426" width="1" height="1" fill="#0000FF"/><rect x="289" y="264" width="1" height="1" fill="#0000FF"/><rect x="289" y="426" width="1" height="1" fill="#0000FF"/><rect x="298" y="264" width="1" height="1" fill="#0000FF"/><rect x="298" y="426" width="1" height="1" fill="#0000FF"/><rect x="308" y="264" width="1" height="1" fill="#0000FF"/><rect x="308" y="426" width="1" height="1" fill="#0000FF"/><rect x="317" y="264" width="1" height="1" fill="#0000FF"/><rect x="317" y="426" width="1" height="1" fill="#0000FF"/><rect x="326" y="264" width="1" height="1" fill="#0000FF"/><rect x="326" y="426" width="1" height="1" fill="#0000FF"/><rect x="335" y="264" width="1" height="1" fill="#0000FF"/><rect x="335" y="426" width="1" height="1" fill="#0000FF"/><rect x="345" y="264" width="1" height="1" fill="#0000FF"/><rect x="345" y="426" width="1" height="1" fill="#0000FF"/><rect x="354" y="264" width="1" height="1" fill="#0000FF"/><rect x="354" y="426" width="1" height="1" fill="#0000FF"/><rect x="363" y="264" width="1" height="1" fill="#0000FF"/><rect x="363" y="426" width="1" height="1" fill="#0000FF"/><rect x="373" y="264" width="1" height="1" fill="#0000FF"/><rect x="373" y="426" width="1" height="1" fill="#0000FF"/><rect x="382" y="264" width="1" height="1" fill="#0000FF"/><rect x="382" y="426" width="1" height="1" fill="#0000FF"/><rect x="391" y="264" width="1" height="1" fill="#0000FF"/><rect x="391" y="426" width="1" height="1" fill="#0000FF"/><rect x="401" y="264" width="1" height="1" fill="#0000FF"/><rect x="401" y="426" width="1" height="1" fill="#0000FF"/><rect x="410" y="264" width="1" height="1" fill="#0000FF"/><rect x="410" y="426" width="1" height="1" fill="#0000FF"/><rect x="419" y="264" width="1" height="1" fill="#0000FF"/><rect x="419" y="426" width="1" height="1" fill="#0000FF"/><rect x="428" y="264" width="1" height="1" fill="#0000FF"/><rect x="428" y="426" width="1" height="1" fill="#0000FF"/><rect x="438" y="264" width="1" height="1" fill="#0000FF"/><rect x="438" y="426" width="1" height="1" fill="#0000FF"/><rect x="447" y="264" width="1" height="1" fill="#0000FF"/><rect x="447" y="426" width="1" height="1" fill="#0000FF"/><rect x="456" y="264" width="1" height="1" fill="#0000FF"/><rect x="456" y="426" width="1" height="1" fill="#0000FF"/><rect x="466" y="264" width="1" height="1" fill="#0000FF"/><rect x="466" y="426" width="1" height="1" fill="#0000FF"/><rect x="48" y="419" width="1" height="7" fill="url(#bg1)"/><rect x="59" y="419" width="1" height="7" fill="url(#bg1)"/><rect x="66" y="419" width="1" height="7" fill="url(#bg1)"/><rect x="81" y="419" width="1" height="7" fill="url(#bg1)"/><rect x="85" y="419" width="1" height="7" fill="url(#bg1)"/><rect x="97" y="419" width="1" height="7" fill="url(#bg1)"/><rect x="115" y="419" width="1" height="7" fill="url(#bg1)"/><rect x="122" y="419" width="1" height="7" fill="url(#bg1)"/><rect x="134" y="419" width="1" height="7" fill="url(#bg1)"/><rect x="141" y="419" width="1" height="7" fill="url(#bg1)"/><rect x="144" y="419" width="1" height="7" fill="url(#bg1)"/><rect x="160" y="419" width="1" height="7" fill="url(#bg1)"/><rect x="179" y="419" width="1" height="7" fill="url(#bg1)"/><rect x="212" y="419" width="1" height="7" fill="url(#bg1)"/><rect x="240" y="419" width="1" height="7" fill="url(#bg1)"/><rect x="242" y="419" width="1" height="7" fill="url(#bg1)"/><rect x="248" y="419" width="1" height="7" fill="url(#bg1)"/><rect x="290" y="419" width="1" height="7" fill="url(#bg1)"/><rect x="316" y="419" width="1" height="7" fill="url(#bg1)"/><rect x="321" y="419" width="1" height="7" fill="url(#bg1)"/><rect x="333" y="419" width="1" height="7" fill="url(#bg1)"/><rect x="348" y="419" width="1" height="7" fill="url(#bg1)"/><rect x="359" y="419" width="1" height="7" fill="url(#bg1)"/><rect x="363" y="419" width="1" height="7" fill="url(#bg1)"/><rect x="369" y="419" width="1" height="7" fill="url(#bg1)"/><rect x="382" y="419" width="1" height="7" fill="url(#bg1)"/><rect x="388" y="419" width="1" height="7" fill="url(#bg1)"/><rect x="434" y="419" width="1" height="7" fill="url(#bg1)"/><rect x="52" y="413" width="1" height="13" fill="url(#bg2)"/><rect x="62" y="413" width="1" height="13" fill="url(#bg2)"/><rect x="63" y="413" width="1" height="13" fill="url(#bg2)"/><rect x="79" y="413" width="1" height="13" fill="url(#bg2)"/><rect x="86" y="413" width="1" height="13" fill="url(#bg2)"/><rect x="88" y="413" width="1" height="13" fill="url(#bg2)"/><rect x="89" y="413" width="1" height="13" fill="url(#bg2)"/><rect x="147" y="413" width="1" height="13" fill="url(#bg2)"/><rect x="148" y="413" width="1" height="13" fill="url(#bg2)"/><rect x="167" y="413" width="1" height="13" fill="url(#bg2)"/><rect x="169" y="413" width="1" height="13" fill="url(#bg2)"/><rect x="171" y="413" width="1" height="13" fill="url(#bg2)"/><rect x="178" y="413" width="1" height="13" fill="url(#bg2)"/><rect x="184" y="413" width="1" height="13" fill="url(#bg2)"/><rect x="195" y="413" width="1" height="13" fill="url(#bg2)"/><rect x="199" y="413" width="1" height="13" fill="url(#bg2)"/><rect x="215" y="413" width="1" height="13" fill="url(#bg2)"/><rect x="220" y="413" width="1" height="13" fill="url(#bg2)"/><rect x="222" y="413" width="1" height="13" fill="url(#bg2)"/><rect x="226" y="413" width="1" height="13" fill="url(#bg2)"/><rect x="233" y="413" width="1" height="13" fill="url(#bg2)"/><rect x="239" y="413" width="1" height="13" fill="url(#bg2)"/><rect x="244" y="413" width="1" height="13" fill="url(#bg2)"/><rect x="257" y="413" width="1" height="13" fill="url(#bg2)"/><rect x="264" y="413" width="1" height="13" fill="url(#bg2)"/><rect x="267" y="413" width="1" height="13" fill="url(#bg2)"/><rect x="272" y="413" width="1" height="13" fill="url(#bg2)"/><rect x="275" y="413" width="1" height="13" fill="url(#bg2)"/><rect x="284" y="413" width="1" height="13" fill="url(#bg2)"/><rect x="286" y="413" width="1" height="13" fill="url(#bg2)"/><rect x="292" y="413" width="1" height="13" fill="url(#bg2)"/><rect x="295" y="413" width="1" height="13" fill="url(#bg2)"/><rect x="302" y="413" width="1" height="13" fill="url(#bg2)"/><rect x="306" y="413" width="1" height="13" fill="url(#bg2)"/><rect x="314" y="413" width="1" height="13" fill="url(#bg2)"/><rect x="323" y="413" width="1" height="13" fill="url(#bg2)"/><rect x="330" y="413" width="1" height="13" fill="url(#bg2)"/><rect x="331" y="413" width="1" height="13" fill="url(#bg2)"/><rect x="334" y="413" width="1" height="13" fill="url(#bg2)"/><rect x="335" y="413" width="1" height="13" fill="url(#bg2)"/><rect x="340" y="413" width="1" height="13" fill="url(#bg2)"/><rect x="345" y="413" width="1" height="13" fill="url(#bg2)"/><rect x="352" y="413" width="1" height="13" fill="url(#bg2)"/><rect x="361" y="413" width="1" height="13" fill="url(#bg2)"/><rect x="367" y="413" width="1" height="13" fill="url(#bg2)"/><rect x="379" y="413" width="1" height="13" fill="url(#bg2)"/><rect x="386" y="413" width="1" height="13" fill="url(#bg2)"/><rect x="50" y="406" width="1" height="20" fill="url(#bg3)"/><rect x="56" y="406" width="1" height="20" fill="url(#bg3)"/><rect x="60" y="406" width="1" height="20" fill="url(#bg3)"/><rect x="61" y="406" width="1" height="20" fill="url(#bg3)"/><rect x="100" y="406" width="1" height="20" fill="url(#bg3)"/><rect x="113" y="406" width="1" height="20" fill="url(#bg3)"/><rect x="125" y="406" width="1" height="20" fill="url(#bg3)"/><rect x="135" y="406" width="1" height="20" fill="url(#bg3)"/><rect x="139" y="406" width="1" height="20" fill="url(#bg3)"/><rect x="165" y="406" width="1" height="20" fill="url(#bg3)"/><rect x="166" y="406" width="1" height="20" fill="url(#bg3)"/><rect x="168" y="406" width="1" height="20" fill="url(#bg3)"/><rect x="170" y="406" width="1" height="20" fill="url(#bg3)"/><rect x="172" y="406" width="1" height="20" fill="url(#bg3)"/><rect x="183" y="406" width="1" height="20" fill="url(#bg3)"/><rect x="185" y="406" width="1" height="20" fill="url(#bg3)"/><rect x="187" y="406" width="1" height="20" fill="url(#bg3)"/><rect x="188" y="406" width="1" height="20" fill="url(#bg3)"/><rect x="189" y="406" width="1" height="20" fill="url(#bg3)"/><rect x="194" y="406" width="1" height="20" fill="url(#bg3)"/><rect x="219" y="406" width="1" height="20" fill="url(#bg3)"/><rect x="225" y="406" width="1" height="20" fill="url(#bg3)"/><rect x="228" y="406" width="1" height="20" fill="url(#bg3)"/><rect x="231" y="406" width="1" height="20" fill="url(#bg3)"/><rect x="258" y="406" width="1" height="20" fill="url(#bg3)"/><rect x="259" y="406" width="1" height="20" fill="url(#bg3)"/><rect x="261" y="406" width="1" height="20" fill="url(#bg3)"/><rect x="266" y="406" width="1" height="20" fill="url(#bg3)"/><rect x="268" y="406" width="1" height="20" fill="url(#bg3)"/><rect x="273" y="406" width="1" height="20" fill="url(#bg3)"/><rect x="276" y="406" width="1" height="20" fill="url(#bg3)"/><rect x="280" y="406" width="1" height="20" fill="url(#bg3)"/><rect x="300" y="406" width="1" height="20" fill="url(#bg3)"/><rect x="304" y="406" width="1" height="20" fill="url(#bg3)"/><rect x="308" y="406" width="1" height="20" fill="url(#bg3)"/><rect x="327" y="406" width="1" height="20" fill="url(#bg3)"/><rect x="393" y="406" width="1" height="20" fill="url(#bg3)"/><rect x="403" y="406" width="1" height="20" fill="url(#bg3)"/><rect x="54" y="399" width="1" height="27" fill="url(#bg4)"/><rect x="55" y="399" width="1" height="27" fill="url(#bg4)"/><rect x="57" y="399" width="1" height="27" fill="url(#bg4)"/><rect x="64" y="399" width="1" height="27" fill="url(#bg4)"/><rect x="65" y="399" width="1" height="27" fill="url(#bg4)"/><rect x="78" y="399" width="1" height="27" fill="url(#bg4)"/><rect x="83" y="399" width="1" height="27" fill="url(#bg4)"/><rect x="90" y="399" width="1" height="27" fill="url(#bg4)"/><rect x="126" y="399" width="1" height="27" fill="url(#bg4)"/><rect x="175" y="399" width="1" height="27" fill="url(#bg4)"/><rect x="205" y="399" width="1" height="27" fill="url(#bg4)"/><rect x="253" y="399" width="1" height="27" fill="url(#bg4)"/><rect x="263" y="399" width="1" height="27" fill="url(#bg4)"/><rect x="270" y="399" width="1" height="27" fill="url(#bg4)"/><rect x="338" y="399" width="1" height="27" fill="url(#bg4)"/><rect x="354" y="399" width="1" height="27" fill="url(#bg4)"/><rect x="372" y="399" width="1" height="27" fill="url(#bg4)"/><rect x="404" y="399" width="1" height="27" fill="url(#bg4)"/><rect x="409" y="399" width="1" height="27" fill="url(#bg4)"/><rect x="410" y="399" width="1" height="27" fill="url(#bg4)"/><rect x="444" y="399" width="1" height="27" fill="url(#bg4)"/><rect x="445" y="399" width="1" height="27" fill="url(#bg4)"/><rect x="446" y="399" width="1" height="27" fill="url(#bg4)"/><rect x="447" y="399" width="1" height="27" fill="url(#bg4)"/><rect x="448" y="399" width="1" height="27" fill="url(#bg4)"/><rect x="449" y="399" width="1" height="27" fill="url(#bg4)"/><rect x="450" y="399" width="1" height="27" fill="url(#bg4)"/><rect x="451" y="399" width="1" height="27" fill="url(#bg4)"/><rect x="453" y="399" width="1" height="27" fill="url(#bg4)"/><rect x="76" y="393" width="1" height="33" fill="url(#bg5)"/><rect x="77" y="393" width="1" height="33" fill="url(#bg5)"/><rect x="108" y="393" width="1" height="33" fill="url(#bg5)"/><rect x="114" y="393" width="1" height="33" fill="url(#bg5)"/><rect x="157" y="393" width="1" height="33" fill="url(#bg5)"/><rect x="192" y="393" width="1" height="33" fill="url(#bg5)"/><rect x="197" y="393" width="1" height="33" fill="url(#bg5)"/><rect x="207" y="393" width="1" height="33" fill="url(#bg5)"/><rect x="260" y="393" width="1" height="33" fill="url(#bg5)"/><rect x="405" y="393" width="1" height="33" fill="url(#bg5)"/><rect x="408" y="393" width="1" height="33" fill="url(#bg5)"/><rect x="429" y="393" width="1" height="33" fill="url(#bg5)"/><rect x="452" y="393" width="1" height="33" fill="url(#bg5)"/><rect x="71" y="386" width="1" height="40" fill="url(#bg6)"/><rect x="73" y="386" width="1" height="40" fill="url(#bg6)"/><rect x="407" y="386" width="1" height="40" fill="url(#bg6)"/><rect x="428" y="386" width="1" height="40" fill="url(#bg6)"/><rect x="70" y="379" width="1" height="47" fill="url(#bg7)"/><rect x="406" y="379" width="1" height="47" fill="url(#bg7)"/><rect x="427" y="379" width="1" height="47" fill="url(#bg7)"/><rect x="68" y="373" width="1" height="53" fill="url(#bg8)"/><rect x="69" y="373" width="1" height="53" fill="url(#bg8)"/><rect x="72" y="373" width="1" height="53" fill="url(#bg8)"/><rect x="411" y="373" width="1" height="53" fill="url(#bg8)"/><rect x="425" y="373" width="1" height="53" fill="url(#bg8)"/><rect x="426" y="373" width="1" height="53" fill="url(#bg8)"/><rect x="74" y="366" width="1" height="60" fill="url(#bg9)"/><rect x="75" y="366" width="1" height="60" fill="url(#bg9)"/><rect x="412" y="366" width="1" height="60" fill="url(#bg9)"/><rect x="418" y="366" width="1" height="60" fill="url(#bg9)"/><rect x="421" y="366" width="1" height="60" fill="url(#bg9)"/><rect x="417" y="353" width="1" height="73" fill="url(#bg11)"/><rect x="419" y="353" width="1" height="73" fill="url(#bg11)"/><rect x="420" y="346" width="1" height="80" fill="url(#bg12)"/><rect x="424" y="346" width="1" height="80" fill="url(#bg12)"/><rect x="413" y="340" width="1" height="86" fill="url(#bg13)"/><rect x="414" y="340" width="1" height="86" fill="url(#bg13)"/><rect x="422" y="340" width="1" height="86" fill="url(#bg13)"/><rect x="416" y="333" width="1" height="93" fill="url(#bg14)"/><rect x="423" y="333" width="1" height="93" fill="url(#bg14)"/><rect x="415" y="320" width="1" height="106" fill="url(#bg16)"/><path d="M48 366h1V368h-1ZM49 366h1V374h-1ZM50 372h1V378h-1ZM51 374h1V378h-1ZM52 373h1V376h-1ZM53 371h1V375h-1ZM54 371h1V375h-1ZM55 373h1V375h-1ZM56 372h1V375h-1ZM57 372h1V374h-1ZM58 371h1V374h-1ZM59 371h1V374h-1ZM60 372h1V374h-1ZM61 372h1V375h-1ZM62 373h1V375h-1ZM63 373h1V375h-1ZM64 372h1V375h-1ZM65 372h1V378h-1ZM66 373h1V378h-1ZM67 372h1V375h-1ZM68 372h1V376h-1ZM69 371h1V376h-1ZM70 371h1V374h-1ZM71 371h1V374h-1ZM72 371h1V375h-1ZM73 373h1V378h-1ZM74 371h1V378h-1ZM75 371h1V374h-1ZM76 372h1V375h-1ZM77 373h1V375h-1ZM78 370h1V375h-1ZM79 370h1V375h-1ZM80 372h1V375h-1ZM81 371h1V374h-1ZM82 371h1V378h-1ZM83 371h1V378h-1ZM84 371h1V373h-1ZM85 371h1V374h-1ZM86 370h1V374h-1ZM87 367h1V372h-1ZM88 367h1V373h-1ZM89 371h1V375h-1ZM90 370h1V375h-1ZM91 370h1V373h-1ZM92 370h1V373h-1ZM93 370h1V374h-1ZM94 372h1V374h-1ZM95 370h1V374h-1ZM96 370h1V372h-1ZM97 370h1V373h-1ZM98 370h1V373h-1ZM99 370h1V374h-1ZM100 370h1V374h-1ZM101 370h1V372h-1ZM102 370h1V373h-1ZM103 368h1V373h-1ZM104 368h1V372h-1ZM105 370h1V373h-1ZM106 369h1V373h-1ZM107 369h1V371h-1ZM108 369h1V374h-1ZM109 371h1V374h-1ZM110 371h1V373h-1ZM111 369h1V373h-1ZM112 369h1V373h-1ZM113 370h1V373h-1ZM114 368h1V372h-1ZM115 368h1V370h-1ZM116 368h1V370h-1ZM117 368h1V371h-1ZM118 367h1V371h-1ZM119 367h1V371h-1ZM120 368h1V371h-1ZM121 368h1V371h-1ZM122 367h1V371h-1ZM123 367h1V370h-1ZM124 368h1V370h-1ZM125 367h1V370h-1ZM126 367h1V369h-1ZM127 367h1V369h-1ZM128 367h1V369h-1ZM129 367h1V369h-1ZM130 367h1V370h-1ZM131 367h1V370h-1ZM132 367h1V370h-1ZM133 365h1V370h-1ZM134 365h1V369h-1ZM135 366h1V369h-1ZM136 366h1V368h-1ZM137 365h1V368h-1ZM138 365h1V369h-1ZM139 365h1V369h-1ZM140 365h1V368h-1ZM141 365h1V368h-1ZM142 365h1V368h-1ZM143 365h1V368h-1ZM144 365h1V369h-1ZM145 365h1V369h-1ZM146 365h1V369h-1ZM147 367h1V370h-1ZM148 364h1V370h-1ZM149 364h1V368h-1ZM150 366h1V368h-1ZM151 366h1V368h-1ZM152 365h1V368h-1ZM153 365h1V371h-1ZM154 365h1V371h-1ZM155 365h1V367h-1ZM156 364h1V367h-1ZM157 364h1V368h-1ZM158 365h1V368h-1ZM159 365h1V368h-1ZM160 366h1V368h-1ZM161 364h1V368h-1ZM162 364h1V367h-1ZM163 365h1V368h-1ZM164 365h1V368h-1ZM165 365h1V368h-1ZM166 366h1V368h-1ZM167 363h1V368h-1ZM168 363h1V367h-1ZM169 365h1V367h-1ZM170 364h1V367h-1ZM171 364h1V366h-1ZM172 364h1V368h-1ZM173 363h1V368h-1ZM174 363h1V366h-1ZM175 364h1V366h-1ZM176 364h1V368h-1ZM177 366h1V368h-1ZM178 366h1V368h-1ZM179 366h1V368h-1ZM180 364h1V368h-1ZM181 364h1V366h-1ZM182 364h1V367h-1ZM183 364h1V367h-1ZM184 364h1V368h-1ZM185 364h1V368h-1ZM186 364h1V366h-1ZM187 364h1V367h-1ZM188 364h1V367h-1ZM189 364h1V366h-1ZM190 364h1V366h-1ZM191 364h1V366h-1ZM192 364h1V366h-1ZM193 363h1V366h-1ZM194 363h1V368h-1ZM195 364h1V368h-1ZM196 364h1V367h-1ZM197 364h1V367h-1ZM198 364h1V367h-1ZM199 364h1V367h-1ZM200 363h1V366h-1ZM201 363h1V365h-1ZM202 363h1V366h-1ZM203 363h1V366h-1ZM204 363h1V365h-1ZM205 363h1V367h-1ZM206 365h1V367h-1ZM207 365h1V367h-1ZM208 363h1V367h-1ZM209 363h1V366h-1ZM210 363h1V366h-1ZM211 361h1V365h-1ZM212 361h1V364h-1ZM213 362h1V365h-1ZM214 363h1V365h-1ZM215 363h1V366h-1ZM216 364h1V366h-1ZM217 363h1V366h-1ZM218 363h1V365h-1ZM219 363h1V365h-1ZM220 363h1V367h-1ZM221 364h1V367h-1ZM222 363h1V366h-1ZM223 363h1V366h-1ZM224 364h1V367h-1ZM225 365h1V368h-1ZM226 363h1V368h-1ZM227 363h1V365h-1ZM228 363h1V366h-1ZM229 363h1V366h-1ZM230 363h1V365h-1ZM231 363h1V368h-1ZM232 363h1V368h-1ZM233 363h1V366h-1ZM234 364h1V367h-1ZM235 364h1V367h-1ZM236 363h1V366h-1ZM237 363h1V367h-1ZM238 363h1V367h-1ZM239 363h1V367h-1ZM240 365h1V367h-1ZM241 363h1V367h-1ZM242 361h1V365h-1ZM243 361h1V367h-1ZM244 365h1V368h-1ZM245 363h1V368h-1ZM246 363h1V367h-1ZM247 365h1V368h-1ZM248 364h1V368h-1ZM249 364h1V368h-1ZM250 364h1V368h-1ZM251 364h1V368h-1ZM252 363h1V368h-1ZM253 363h1V368h-1ZM254 364h1V368h-1ZM255 364h1V366h-1ZM256 364h1V368h-1ZM257 365h1V368h-1ZM258 364h1V367h-1ZM259 364h1V368h-1ZM260 365h1V368h-1ZM261 363h1V367h-1ZM262 363h1V365h-1ZM263 360h1V365h-1ZM264 360h1V367h-1ZM265 365h1V368h-1ZM266 363h1V368h-1ZM267 362h1V365h-1ZM268 362h1V365h-1ZM269 363h1V365h-1ZM270 363h1V366h-1ZM271 364h1V368h-1ZM272 365h1V368h-1ZM273 364h1V367h-1ZM274 363h1V366h-1ZM275 363h1V368h-1ZM276 363h1V368h-1ZM277 363h1V367h-1ZM278 363h1V367h-1ZM279 363h1V367h-1ZM280 364h1V367h-1ZM281 364h1V366h-1ZM282 363h1V366h-1ZM283 363h1V368h-1ZM284 365h1V368h-1ZM285 364h1V367h-1ZM286 362h1V366h-1ZM287 362h1V366h-1ZM288 364h1V367h-1ZM289 365h1V368h-1ZM290 365h1V368h-1ZM291 363h1V367h-1ZM292 363h1V367h-1ZM293 363h1V367h-1ZM294 363h1V366h-1ZM295 363h1V366h-1ZM296 363h1V366h-1ZM297 364h1V366h-1ZM298 364h1V366h-1ZM299 364h1V367h-1ZM300 363h1V367h-1ZM301 363h1V365h-1ZM302 363h1V367h-1ZM303 365h1V367h-1ZM304 364h1V367h-1ZM305 364h1V368h-1ZM306 366h1V371h-1ZM307 364h1V371h-1ZM308 364h1V366h-1ZM309 364h1V368h-1ZM310 366h1V368h-1ZM311 364h1V368h-1ZM312 362h1V366h-1ZM313 362h1V366h-1ZM314 364h1V366h-1ZM315 363h1V366h-1ZM316 363h1V367h-1ZM317 363h1V367h-1ZM318 363h1V366h-1ZM319 364h1V366h-1ZM320 364h1V367h-1ZM321 364h1V367h-1ZM322 364h1V367h-1ZM323 364h1V367h-1ZM324 363h1V366h-1ZM325 363h1V365h-1ZM326 363h1V367h-1ZM327 364h1V367h-1ZM328 363h1V366h-1ZM329 363h1V365h-1ZM330 363h1V365h-1ZM331 363h1V367h-1ZM332 365h1V367h-1ZM333 362h1V367h-1ZM334 362h1V365h-1ZM335 363h1V367h-1ZM336 362h1V367h-1ZM337 362h1V369h-1ZM338 365h1V369h-1ZM339 364h1V367h-1ZM340 363h1V366h-1ZM341 363h1V366h-1ZM342 364h1V366h-1ZM343 364h1V366h-1ZM344 364h1V366h-1ZM345 363h1V366h-1ZM346 362h1V365h-1ZM347 362h1V366h-1ZM348 363h1V366h-1ZM349 363h1V365h-1ZM350 363h1V365h-1ZM351 363h1V365h-1ZM352 362h1V365h-1ZM353 362h1V366h-1ZM354 363h1V366h-1ZM355 361h1V365h-1ZM356 361h1V363h-1ZM357 361h1V366h-1ZM358 361h1V366h-1ZM359 361h1V364h-1ZM360 362h1V364h-1ZM361 362h1V365h-1ZM362 362h1V365h-1ZM363 361h1V364h-1ZM364 361h1V364h-1ZM365 361h1V364h-1ZM366 359h1V363h-1ZM367 358h1V361h-1ZM368 358h1V363h-1ZM369 361h1V364h-1ZM370 361h1V364h-1ZM371 361h1V364h-1ZM372 361h1V364h-1ZM373 361h1V364h-1ZM374 360h1V364h-1ZM375 360h1V364h-1ZM376 361h1V364h-1ZM377 361h1V363h-1ZM378 361h1V364h-1ZM379 361h1V364h-1ZM380 361h1V364h-1ZM381 360h1V364h-1ZM382 359h1V362h-1ZM383 359h1V362h-1ZM384 360h1V362h-1ZM385 359h1V362h-1ZM386 357h1V361h-1ZM387 357h1V362h-1ZM388 359h1V362h-1ZM389 359h1V362h-1ZM390 360h1V363h-1ZM391 359h1V363h-1ZM392 358h1V361h-1ZM393 358h1V361h-1ZM394 359h1V362h-1ZM395 360h1V362h-1ZM396 356h1V362h-1ZM397 356h1V360h-1ZM398 358h1V360h-1ZM399 358h1V362h-1ZM400 358h1V362h-1ZM401 358h1V362h-1ZM402 360h1V362h-1ZM403 360h1V362h-1ZM404 360h1V362h-1ZM405 360h1V362h-1ZM406 359h1V362h-1ZM407 359h1V361h-1ZM408 359h1V362h-1ZM409 358h1V362h-1ZM410 357h1V360h-1ZM411 357h1V359h-1ZM412 357h1V359h-1ZM413 357h1V360h-1ZM414 357h1V360h-1ZM415 357h1V360h-1ZM416 358h1V361h-1ZM417 358h1V361h-1ZM418 357h1V360h-1ZM419 355h1V359h-1ZM420 355h1V360h-1ZM421 357h1V360h-1ZM422 357h1V360h-1ZM423 358h1V363h-1ZM424 358h1V363h-1ZM425 358h1V361h-1ZM426 357h1V361h-1ZM427 357h1V360h-1ZM428 357h1V360h-1ZM429 357h1V359h-1ZM430 357h1V359h-1ZM431 357h1V359h-1ZM432 356h1V359h-1ZM433 356h1V361h-1ZM434 358h1V361h-1ZM435 356h1V360h-1ZM436 356h1V359h-1ZM437 357h1V362h-1ZM438 355h1V362h-1ZM439 355h1V359h-1ZM440 357h1V359h-1ZM441 357h1V360h-1ZM442 357h1V360h-1ZM443 357h1V359h-1ZM444 357h1V359h-1ZM445 355h1V359h-1ZM446 355h1V358h-1ZM447 355h1V358h-1ZM448 355h1V357h-1ZM449 355h1V359h-1ZM450 356h1V359h-1ZM451 356h1V359h-1ZM452 355h1V359h-1Z" fill="#FF00FF"/><rect x="454" y="131" width="1" height="134" fill="#E8E8E8"/><rect x="454" y="293" width="1" height="134" fill="#E8E8E8"/><rect x="466" y="264" width="4" height="1" fill="#0000FF"/><rect x="466" y="259" width="2" height="1" fill="#0000FF"/><rect x="466" y="254" width="2" height="1" fill="#0000FF"/><rect x="466" y="249" width="2" height="1" fill="#0000FF"/><rect x="466" y="244" width="4" height="1" fill="#0000FF"/><rect x="466" y="239" width="2" height="1" fill="#0000FF"/><rect x="466" y="234" width="2" height="1" fill="#0000FF"/><rect x="466" y="229" width="2" height="1" fill="#0000FF"/><rect x="466" y="224" width="4" height="1" fill="#0000FF"/><rect x="466" y="218" width="2" height="1" fill="#0000FF"/><rect x="466" y="213" width="2" height="1" fill="#0000FF"/><rect x="466" y="208" width="2" height="1" fill="#0000FF"/><rect x="466" y="203" width="4" height="1" fill="#0000FF"/><rect x="466" y="198" width="2" height="1" fill="#0000FF"/><rect x="466" y="193" width="2" height="1" fill="#0000FF"/><rect x="466" y="188" width="2" height="1" fill="#0000FF"/><rect x="466" y="183" width="4" height="1" fill="#0000FF"/><rect x="466" y="178" width="2" height="1" fill="#0000FF"/><rect x="466" y="172" width="2" height="1" fill="#0000FF"/><rect x="466" y="167" width="2" height="1" fill="#0000FF"/><rect x="466" y="162" width="4" height="1" fill="#0000FF"/><rect x="466" y="157" width="2" height="1" fill="#0000FF"/><rect x="466" y="152" width="2" height="1" fill="#0000FF"/><rect x="466" y="147" width="2" height="1" fill="#0000FF"/><rect x="466" y="142" width="4" height="1" fill="#0000FF"/><rect x="466" y="137" width="2" height="1" fill="#0000FF"/><rect x="466" y="132" width="2" height="1" fill="#0000FF"/></svg>
<div class="t" style="left:24px;top:124px;color:#000;transform:scaleY(1.12);transform-origin:0 10px;">100</div>
<div class="t" style="left:30px;top:151px;color:#000;transform:scaleY(1.12);transform-origin:0 10px;">80</div>
<div class="t" style="left:30px;top:178px;color:#000;transform:scaleY(1.12);transform-origin:0 10px;">60</div>
<div class="t" style="left:30px;top:204px;color:#000;transform:scaleY(1.12);transform-origin:0 10px;">40</div>
<div class="t" style="left:30px;top:231px;color:#000;transform:scaleY(1.12);transform-origin:0 10px;">20</div>
<div class="t" style="left:30px;top:286px;color:#000;transform:scaleY(1.12);transform-origin:0 10px;">20</div>
<div class="t" style="left:470px;top:286px;color:#000;transform:scaleY(1.12);transform-origin:0 10px;">20</div>
<div class="t" style="left:30px;top:313px;color:#000;transform:scaleY(1.12);transform-origin:0 10px;">16</div>
<div class="t" style="left:470px;top:313px;color:#000;transform:scaleY(1.12);transform-origin:0 10px;">16</div>
<div class="t" style="left:30px;top:340px;color:#000;transform:scaleY(1.12);transform-origin:0 10px;">12</div>
<div class="t" style="left:470px;top:340px;color:#000;transform:scaleY(1.12);transform-origin:0 10px;">12</div>
<div class="t" style="left:36px;top:366px;color:#000;transform:scaleY(1.12);transform-origin:0 10px;">8</div>
<div class="t" style="left:470px;top:366px;color:#000;transform:scaleY(1.12);transform-origin:0 10px;">8</div>
<div class="t" style="left:36px;top:393px;color:#000;transform:scaleY(1.12);transform-origin:0 10px;">4</div>
<div class="t" style="left:470px;top:393px;color:#000;transform:scaleY(1.12);transform-origin:0 10px;">4</div>
<div class="t" style="left:470px;top:135px;color:#000;transform:scaleY(1.12);transform-origin:0 10px;">24</div>
<div class="t" style="left:470px;top:155px;color:#000;transform:scaleY(1.12);transform-origin:0 10px;">20</div>
<div class="t" style="left:470px;top:176px;color:#000;transform:scaleY(1.12);transform-origin:0 10px;">16</div>
<div class="t" style="left:470px;top:196px;color:#000;transform:scaleY(1.12);transform-origin:0 10px;">12</div>
<div class="t" style="left:470px;top:217px;color:#000;transform:scaleY(1.12);transform-origin:0 10px;">8</div>
<div class="t" style="left:470px;top:237px;color:#000;transform:scaleY(1.12);transform-origin:0 10px;">4</div>
<div class="t" style="left:42px;top:268px;color:#000;transform:scaleY(1.12);transform-origin:0 10px;">0.0</div>
<div class="t" style="left:42px;top:430px;color:#000;transform:scaleY(1.12);transform-origin:0 10px;">0.0</div>
<div class="t" style="left:89px;top:268px;color:#000;transform:scaleY(1.12);transform-origin:0 10px;">0.5</div>
<div class="t" style="left:89px;top:430px;color:#000;transform:scaleY(1.12);transform-origin:0 10px;">0.5</div>
<div class="t" style="left:135px;top:268px;color:#000;transform:scaleY(1.12);transform-origin:0 10px;">1.0</div>
<div class="t" style="left:135px;top:430px;color:#000;transform:scaleY(1.12);transform-origin:0 10px;">1.0</div>
<div class="t" style="left:182px;top:268px;color:#000;transform:scaleY(1.12);transform-origin:0 10px;">1.5</div>
<div class="t" style="left:182px;top:430px;color:#000;transform:scaleY(1.12);transform-origin:0 10px;">1.5</div>
<div class="t" style="left:228px;top:268px;color:#000;transform:scaleY(1.12);transform-origin:0 10px;">2.0</div>
<div class="t" style="left:228px;top:430px;color:#000;transform:scaleY(1.12);transform-origin:0 10px;">2.0</div>
<div class="t" style="left:275px;top:268px;color:#000;transform:scaleY(1.12);transform-origin:0 10px;">2.5</div>
<div class="t" style="left:275px;top:430px;color:#000;transform:scaleY(1.12);transform-origin:0 10px;">2.5</div>
<div class="t" style="left:321px;top:268px;color:#000;transform:scaleY(1.12);transform-origin:0 10px;">3.0</div>
<div class="t" style="left:321px;top:430px;color:#000;transform:scaleY(1.12);transform-origin:0 10px;">3.0</div>
<div class="t" style="left:368px;top:268px;color:#000;transform:scaleY(1.12);transform-origin:0 10px;">3.5</div>
<div class="t" style="left:368px;top:430px;color:#000;transform:scaleY(1.12);transform-origin:0 10px;">3.5</div>
<div class="t" style="left:414px;top:268px;color:#000;transform:scaleY(1.12);transform-origin:0 10px;">4.0</div>
<div class="t" style="left:414px;top:430px;color:#000;transform:scaleY(1.12);transform-origin:0 10px;">4.0</div>
<div class="t" style="left:461px;top:268px;color:#000;transform:scaleY(1.12);transform-origin:0 10px;">4.5</div>
<div class="t" style="left:461px;top:430px;color:#000;transform:scaleY(1.12);transform-origin:0 10px;">4.5</div>
<div style="left:492px;top:126px;width:139px;height:82px;border:1px solid #fff"></div>
<div style="left:491px;top:125px;width:139px;height:82px;border:1px solid #808080"></div>
<div style="left:498px;top:118px;width:46px;height:14px;background:#D4D0C8;"></div>
<div class="t" style="left:500px;top:120px;color:#000;transform:scaleY(1.12);transform-origin:0 10px;">Disc info</div>
<div class="t" style="left:500px;top:134px;color:#000;transform:scaleY(1.12);transform-origin:0 10px;">Type:</div>
<div class="t" style="left:545px;top:134px;color:#000080;transform:scaleY(1.12);transform-origin:0 10px;">DVD-R</div>
<div class="t" style="left:500px;top:151px;color:#000;transform:scaleY(1.12);transform-origin:0 10px;">ID:</div>
<div class="t" style="left:545px;top:151px;color:#000080;transform:scaleY(1.12);transform-origin:0 10px;">SONY16D1</div>
<div class="t" style="left:500px;top:169px;color:#000;transform:scaleY(1.12);transform-origin:0 10px;">Date:</div>
<div class="t" style="left:545px;top:169px;color:#000080;transform:scaleY(1.12);transform-origin:0 10px;">n/a</div>
<div class="t" style="left:500px;top:187px;color:#000;transform:scaleY(1.12);transform-origin:0 10px;">Label:</div>
<div class="t" style="left:545px;top:187px;color:#000080;transform:scaleY(1.12);transform-origin:0 10px;">n/a</div>
<div style="left:492px;top:217px;width:139px;height:203px;border:1px solid #fff"></div>
<div style="left:491px;top:216px;width:139px;height:203px;border:1px solid #808080"></div>
<div style="left:498px;top:209px;width:44px;height:14px;background:#D4D0C8;"></div>
<div class="t" style="left:500px;top:211px;color:#000;transform:scaleY(1.12);transform-origin:0 10px;">Settings</div>
<div style="left:500px;top:225px;width:83px;height:21px;background:#fff;box-shadow: inset -1px -1px #fff, inset 1px 1px #808080, inset -2px -2px #D4D0C8, inset 2px 2px #404040;"></div>
<div class="t" style="left:504px;top:230px;color:#000;transform:scaleY(1.12);transform-origin:0 10px;letter-spacing:1px">8X</div>
<div style="left:566px;top:227px;width:15px;height:17px;background:#D4D0C8;box-shadow: inset -1px -1px #404040, inset 1px 1px #D4D0C8, inset -2px -2px #808080, inset 2px 2px #fff;"></div>
<svg style="left:570px;top:233px" width="8" height="5"><path d="M0 0 H7 L3.5 4 Z" fill="#000"/></svg>
<div style="left:592px;top:224px;width:23px;height:23px;background:#D4D0C8;box-shadow: inset -1px -1px #404040, inset 1px 1px #fff, inset -2px -2px #808080;"></div>
<div style="left:596px;top:227px;width:14px;height:16px;border:1px solid #000;background:#fff"></div>
<svg style="left:596px;top:227px" width="14" height="16" viewBox="0 0 14 16"><g fill="none" stroke="#008000" stroke-width="1.3"><path d="M3.5 8.5 V4.5 H6.5"/><path d="M10.5 7.5 V11.5 H7.5"/></g><path d="M6 1.5 L9.5 4.5 L6 7.5 Z M8 8.5 L4.5 11.5 L8 14.5 Z" fill="#008000"/></svg>
<div class="t" style="left:501px;top:257px;color:#000;transform:scaleY(1.12);transform-origin:0 10px;">Start:</div>
<div style="left:554px;top:251px;width:60px;height:20px;background:#fff;box-shadow: inset -1px -1px #fff, inset 1px 1px #808080, inset -2px -2px #D4D0C8, inset 2px 2px #404040;"></div>
<div class="t" style="left:557px;top:256px;color:#000;transform:scaleY(1.12);transform-origin:0 10px;">0000 MB</div>
<div class="t" style="left:501px;top:280px;color:#000;transform:scaleY(1.12);transform-origin:0 10px;">End:</div>
<div style="left:554px;top:274px;width:60px;height:20px;background:#fff;box-shadow: inset -1px -1px #fff, inset 1px 1px #808080, inset -2px -2px #D4D0C8, inset 2px 2px #404040;"></div>
<div class="t" style="left:557px;top:279px;color:#000;transform:scaleY(1.12);transform-origin:0 10px;">4480 MB</div>
<div style="left:502px;top:297px;width:13px;height:13px;background:#fff;box-shadow: inset -1px -1px #fff, inset 1px 1px #808080, inset -2px -2px #D4D0C8, inset 2px 2px #404040;"></div>
<div class="t" style="left:520px;top:297px;color:#000;transform:scaleY(1.12);transform-origin:0 10px;">Quick scan</div>
<div style="left:502px;top:314px;width:13px;height:13px;background:#fff;box-shadow: inset -1px -1px #fff, inset 1px 1px #808080, inset -2px -2px #D4D0C8, inset 2px 2px #404040;"></div>
<svg style="left:505px;top:317px" width="7" height="7" viewBox="0 0 7 7" shape-rendering="crispEdges"><path d="M0 2h1v3h-1zM1 3h1v3h-1zM2 4h1v3h-1zM3 3h1v3h-1zM4 2h1v3h-1zM5 1h1v3h-1zM6 0h1v3h-1z" fill="#000"/></svg>
<div class="t" style="left:520px;top:314px;color:#000;transform:scaleY(1.12);transform-origin:0 10px;">Show C1/PIE</div>
<div style="left:502px;top:330px;width:13px;height:13px;background:#fff;box-shadow: inset -1px -1px #fff, inset 1px 1px #808080, inset -2px -2px #D4D0C8, inset 2px 2px #404040;"></div>
<svg style="left:505px;top:333px" width="7" height="7" viewBox="0 0 7 7" shape-rendering="crispEdges"><path d="M0 2h1v3h-1zM1 3h1v3h-1zM2 4h1v3h-1zM3 3h1v3h-1zM4 2h1v3h-1zM5 1h1v3h-1zM6 0h1v3h-1z" fill="#000"/></svg>
<div class="t" style="left:520px;top:330px;color:#000;transform:scaleY(1.12);transform-origin:0 10px;">Show C2/PIF</div>
<div style="left:502px;top:346px;width:13px;height:13px;background:#fff;box-shadow: inset -1px -1px #fff, inset 1px 1px #808080, inset -2px -2px #D4D0C8, inset 2px 2px #404040;"></div>
<svg style="left:505px;top:349px" width="7" height="7" viewBox="0 0 7 7" shape-rendering="crispEdges"><path d="M0 2h1v3h-1zM1 3h1v3h-1zM2 4h1v3h-1zM3 3h1v3h-1zM4 2h1v3h-1zM5 1h1v3h-1zM6 0h1v3h-1z" fill="#000"/></svg>
<div class="t" style="left:520px;top:346px;color:#000;transform:scaleY(1.12);transform-origin:0 10px;">Show jitter</div>
<div style="left:502px;top:362px;width:13px;height:13px;background:#fff;box-shadow: inset -1px -1px #fff, inset 1px 1px #808080, inset -2px -2px #D4D0C8, inset 2px 2px #404040;"></div>
<svg style="left:505px;top:365px" width="7" height="7" viewBox="0 0 7 7" shape-rendering="crispEdges"><path d="M0 2h1v3h-1zM1 3h1v3h-1zM2 4h1v3h-1zM3 3h1v3h-1zM4 2h1v3h-1zM5 1h1v3h-1zM6 0h1v3h-1z" fill="#000"/></svg>
<div class="t" style="left:520px;top:362px;color:#000;transform:scaleY(1.12);transform-origin:0 10px;">Show read speed</div>
<div style="left:502px;top:377px;width:13px;height:13px;background:#D4D0C8;box-shadow: inset -1px -1px #fff, inset 1px 1px #808080, inset -2px -2px #D4D0C8, inset 2px 2px #404040;"></div>
<svg style="left:505px;top:380px" width="7" height="7" viewBox="0 0 7 7" shape-rendering="crispEdges"><path d="M0 2h1v3h-1zM1 3h1v3h-1zM2 4h1v3h-1zM3 3h1v3h-1zM4 2h1v3h-1zM5 1h1v3h-1zM6 0h1v3h-1z" fill="#808080"/></svg>
<div class="t" style="left:520px;top:377px;color:#808080;transform:scaleY(1.12);transform-origin:0 10px;text-shadow:1px 1px #fff;">Show write speed</div>
<div style="left:527px;top:393px;width:98px;height:23px;background:#D4D0C8;box-shadow: inset -1px -1px #404040, inset 1px 1px #fff, inset -2px -2px #808080;"></div>
<div class="t" style="left:552px;top:398px;color:#000;transform:scaleY(1.12);transform-origin:0 10px;">Advanced</div>
<div style="left:492px;top:426px;width:139px;height:26px;border:1px solid #fff"></div>
<div style="left:491px;top:425px;width:139px;height:26px;border:1px solid #808080"></div>
<div class="t" style="left:502px;top:433px;color:#000;transform:scaleY(1.12);transform-origin:0 10px;">Quality score:</div>
<div class="t" style="left:609px;top:433px;color:#000080;transform:scaleY(1.12);transform-origin:0 10px;">90</div>
<div style="left:492px;top:458px;width:139px;height:56px;border:1px solid #fff"></div>
<div style="left:491px;top:457px;width:139px;height:56px;border:1px solid #808080"></div>
<div class="t" style="left:502px;top:467px;color:#000;transform:scaleY(1.12);transform-origin:0 10px;">Progress:</div>
<div class="t" style="left:590px;top:467px;color:#000080;transform:scaleY(1.12);transform-origin:0 10px;">100 %</div>
<div class="t" style="left:502px;top:483px;color:#000;transform:scaleY(1.12);transform-origin:0 10px;">Position:</div>
<div class="t" style="left:577px;top:483px;color:#000080;transform:scaleY(1.12);transform-origin:0 10px;">4479 MB</div>
<div class="t" style="left:502px;top:498px;color:#000;transform:scaleY(1.12);transform-origin:0 10px;">Speed:</div>
<div class="t" style="left:589px;top:498px;color:#000080;transform:scaleY(1.12);transform-origin:0 10px;">8.29 X</div>
<div style="left:15px;top:458px;width:146px;height:57px;border:1px solid #fff"></div>
<div style="left:14px;top:457px;width:146px;height:57px;border:1px solid #808080"></div>
<div style="left:22px;top:450px;width:54px;height:14px;background:#D4D0C8;"></div>
<div style="left:24px;top:454px;width:8px;height:8px;border:1px solid #000;background:#00FFFF"></div>
<div class="t" style="left:36px;top:452px;color:#000;transform:scaleY(1.12);transform-origin:0 10px;">PI Errors</div>
<div class="t" style="left:22px;top:468px;color:#000;transform:scaleY(1.12);transform-origin:0 10px;">Average:</div>
<div class="t" style="left:130px;top:468px;color:#000080;transform:scaleY(1.12);transform-origin:0 10px;">7.79</div>
<div class="t" style="left:22px;top:483px;color:#000;transform:scaleY(1.12);transform-origin:0 10px;">Maximum:</div>
<div class="t" style="left:139px;top:483px;color:#000080;transform:scaleY(1.12);transform-origin:0 10px;">72</div>
<div class="t" style="left:22px;top:498px;color:#000;transform:scaleY(1.12);transform-origin:0 10px;">Total:</div>
<div class="t" style="left:114px;top:498px;color:#000080;transform:scaleY(1.12);transform-origin:0 10px;">139625</div>
<div style="left:173px;top:458px;width:146px;height:57px;border:1px solid #fff"></div>
<div style="left:172px;top:457px;width:146px;height:57px;border:1px solid #808080"></div>
<div style="left:180px;top:450px;width:64px;height:14px;background:#D4D0C8;"></div>
<div style="left:182px;top:454px;width:8px;height:8px;border:1px solid #000;background:#FFFF00"></div>
<div class="t" style="left:194px;top:452px;color:#000;transform:scaleY(1.12);transform-origin:0 10px;">PI Failures</div>
<div class="t" style="left:180px;top:468px;color:#000;transform:scaleY(1.12);transform-origin:0 10px;">Average:</div>
<div class="t" style="left:288px;top:468px;color:#000080;transform:scaleY(1.12);transform-origin:0 10px;">0.07</div>
<div class="t" style="left:180px;top:483px;color:#000;transform:scaleY(1.12);transform-origin:0 10px;">Maximum:</div>
<div class="t" style="left:297px;top:483px;color:#000080;transform:scaleY(1.12);transform-origin:0 10px;">16</div>
<div class="t" style="left:180px;top:498px;color:#000;transform:scaleY(1.12);transform-origin:0 10px;">Total:</div>
<div class="t" style="left:284px;top:498px;color:#000080;transform:scaleY(1.12);transform-origin:0 10px;">9510</div>
<div style="left:332px;top:458px;width:147px;height:43px;border:1px solid #fff"></div>
<div style="left:331px;top:457px;width:147px;height:43px;border:1px solid #808080"></div>
<div style="left:339px;top:450px;width:35px;height:14px;background:#D4D0C8;"></div>
<div style="left:341px;top:454px;width:8px;height:8px;border:1px solid #000;background:#FF00FF"></div>
<div class="t" style="left:353px;top:452px;color:#000;transform:scaleY(1.12);transform-origin:0 10px;">Jitter</div>
<div class="t" style="left:339px;top:468px;color:#000;transform:scaleY(1.12);transform-origin:0 10px;">Average:</div>
<div class="t" style="left:435px;top:468px;color:#000080;transform:scaleY(1.12);transform-origin:0 10px;">8.95 %</div>
<div class="t" style="left:339px;top:483px;color:#000;transform:scaleY(1.12);transform-origin:0 10px;">Maximum:</div>
<div class="t" style="left:435px;top:483px;color:#000080;transform:scaleY(1.12);transform-origin:0 10px;">10.9 %</div>
<div class="t" style="left:340px;top:502px;color:#000;transform:scaleY(1.12);transform-origin:0 10px;">PO failures:</div>
<div class="t" style="left:462px;top:502px;color:#000080;transform:scaleY(1.12);transform-origin:0 10px;">0</div>
</body></html>
